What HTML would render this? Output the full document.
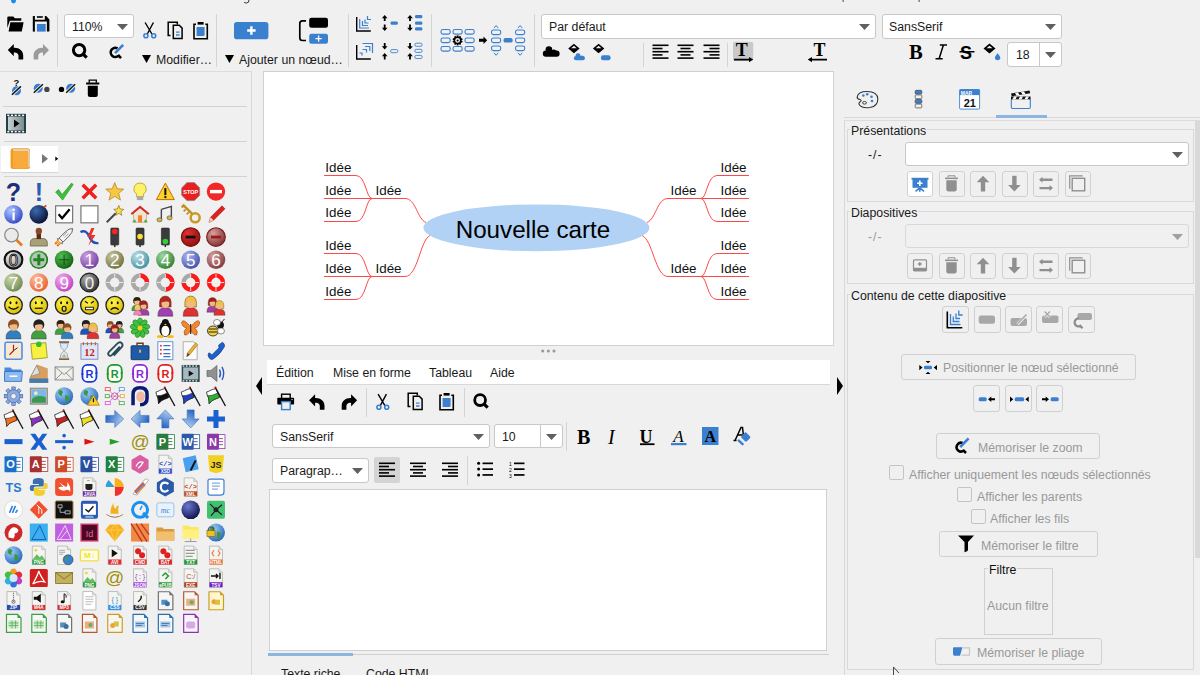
<!DOCTYPE html>
<html><head><meta charset="utf-8"><style>
html,body{margin:0;padding:0;}
body{width:1200px;height:675px;overflow:hidden;position:relative;background:#f0f0f0;font-family:"Liberation Sans", sans-serif;}
.t{position:absolute;white-space:nowrap;}
svg{overflow:visible}
</style></head><body>
<svg style="position:absolute;left:0;top:0" width="1200" height="675"><path d="M7.3 17.5Q7.3 16.5 8.3 16.5H13.3L14.8 18.2H21.3V20.8H9.8L7.3 28Z" fill="#000"/><path d="M10.4 22.2H23.6L21.8 31.6H8.6Z" fill="#000"/><rect x="32.8" y="16" width="2.1" height="15.6" fill="#000"/><path d="M44.8 16H46.2L49.4 19.4V31.6H46.9V21.4H34.8V19.7H44.8Z" fill="#000"/><rect x="36.9" y="16.2" width="5.9" height="1.6" fill="#000"/><rect x="36.9" y="24" width="8.8" height="7.6" fill="#3b7fcf"/><path transform="translate(0,0)" d="M7.8 50 L13.8 44 V47.8 H14.5 C19.5 47.8 23.2 51 23.2 55.5 V59.6 H18.5 V55.8 C18.5 53.8 17 52.5 14.8 52.5 H13.8 V56.2 Z" fill="#000"/><path transform="translate(0,0) translate(56.8,0) scale(-1,1)" d="M7.8 50 L13.8 44 V47.8 H14.5 C19.5 47.8 23.2 51 23.2 55.5 V59.6 H18.5 V55.8 C18.5 53.8 17 52.5 14.8 52.5 H13.8 V56.2 Z" fill="#9a9a9a"/><circle cx="79.1" cy="50.1" r="5.7" fill="none" stroke="#000" stroke-width="3"/><path d="M83.39999999999999 54.4L86.69999999999999 57.7" stroke="#000" stroke-width="3.2" stroke-linecap="butt"/><path d="M117.5 48.3A4.6 4.6 0 1 0 118.6 55.6" fill="none" stroke="#000" stroke-width="2.6"/><path d="M118 55L121 58.2" stroke="#000" stroke-width="2.6"/><path d="M115 53.2L123.2 44.8" stroke="#3b7fcf" stroke-width="2.6"/><g transform="translate(0,0)"><path d="M145.1 22.5L151.9 34M153.4 22.5L147.3 34" stroke="#000" stroke-width="1.4"/><circle cx="145.9" cy="35.7" r="2" fill="none" stroke="#3b7fcf" stroke-width="1.6"/><circle cx="153.7" cy="35.7" r="2" fill="none" stroke="#3b7fcf" stroke-width="1.6"/></g><g transform="translate(0,0)"><path d="M170.5 35.5H168.2V22.3H177.3V24.6" fill="none" stroke="#000" stroke-width="1.5"/><path d="M173.3 38.4V25.3H179.3L182.1 28.1V38.4Z" fill="none" stroke="#000" stroke-width="1.5"/><path d="M176 32.2H179.6M176 35H179.6" stroke="#3b7fcf" stroke-width="1.3"/></g><g transform="translate(0,0)"><path d="M196 24.3H194V38.8H207.3V24.3H205.3" fill="none" stroke="#000" stroke-width="1.6"/><rect x="197.6" y="22" width="6" height="2.6" fill="#000"/><path d="M196.6 27H204.6V34.5Q204.6 36 203 36H196.6Z" fill="#3b7fcf"/></g><rect x="234" y="22" width="34.4" height="17.2" rx="2.8" fill="#3b7fcf"/><path d="M251.4 26.3V34.7M247.2 30.5H255.6" stroke="#fff" stroke-width="2.4"/><path d="M306 20.9H302.5Q299.8 20.9 299.8 23.6V37.8Q299.8 40.5 302.5 40.5H306" fill="none" stroke="#000" stroke-width="1.7"/><rect x="309.2" y="17.7" width="18.8" height="10.1" rx="2.2" fill="#000"/><rect x="309.2" y="33.7" width="18.8" height="10.1" rx="2.2" fill="#3b7fcf"/><path d="M318.6 35.6V41.8M315.5 38.7H321.7" stroke="#fff" stroke-width="1.3"/><path d="M356.7 17V31H370.8" fill="none" stroke="#000" stroke-width="1.4"/><path d="M359.7 19V28H369M362.5 21V25.5H368M365 19.5V23H368.5M367.5 16V19.5H371" fill="none" stroke="#3b7fcf" stroke-width="1.2"/><path d="M384.7 15L387.5 18.2H385.59999999999997V21H383.8V18.2H381.9Z" fill="#000"/><path d="M384.7 31L387.5 27.8H385.59999999999997V24.5H383.8V27.8H381.9Z" fill="#000"/><rect x="390.5" y="21.5" width="7.4" height="3.3" rx="1.386" fill="#3b7fcf"/><path d="M410 15L412.8 18.2H410.9V21H409.1V18.2H407.2Z" fill="#000"/><path d="M410 31L412.8 27.8H410.9V24.5H409.1V27.8H407.2Z" fill="#000"/><rect x="415" y="15" width="7.4" height="3.3" rx="1.386" fill="#3b7fcf"/><rect x="415" y="21.5" width="7.4" height="3.3" rx="1.386" fill="#3b7fcf"/><rect x="415" y="27.3" width="7.4" height="3.3" rx="1.386" fill="#3b7fcf"/><path d="M356.7 45V59H370.8" fill="none" stroke="#000" stroke-width="1.4"/><path d="M362.5 43.5H372.5V53M365 46.5H369.8V51M362.5 49.5H366.5V52.5M359.5 53H362V55.5" fill="none" stroke="#3b7fcf" stroke-width="1.2"/><path d="M384.7 49.5L387.5 46.3H385.59999999999997V43H383.8V46.3H381.9Z" fill="#000"/><path d="M384.7 53L387.5 56.2H385.59999999999997V59.5H383.8V56.2H381.9Z" fill="#000"/><rect x="390.6" y="49.6" width="7.2" height="3.1" rx="1.302" fill="none" stroke="#3b7fcf" stroke-width="0.9"/><path d="M410 49.5L412.8 46.3H410.9V43H409.1V46.3H407.2Z" fill="#000"/><path d="M410 53L412.8 56.2H410.9V59.5H409.1V56.2H407.2Z" fill="#000"/><rect x="414.9" y="43.2" width="7.2" height="3.1" rx="1.302" fill="none" stroke="#3b7fcf" stroke-width="0.9"/><rect x="414.9" y="49.3" width="7.2" height="3.1" rx="1.302" fill="none" stroke="#3b7fcf" stroke-width="0.9"/><rect x="414.9" y="55.4" width="7.2" height="3.1" rx="1.302" fill="none" stroke="#3b7fcf" stroke-width="0.9"/><rect x="441" y="29.5" width="9.2" height="4.6" rx="1.9319999999999997" fill="none" stroke="#3b7fcf" stroke-width="1.1"/><rect x="441" y="38" width="9.2" height="4.6" rx="1.9319999999999997" fill="none" stroke="#3b7fcf" stroke-width="1.1"/><rect x="441" y="46.5" width="9.2" height="4.6" rx="1.9319999999999997" fill="none" stroke="#3b7fcf" stroke-width="1.1"/><rect x="453" y="29.5" width="9.2" height="4.6" rx="1.9319999999999997" fill="none" stroke="#3b7fcf" stroke-width="1.1"/><rect x="453" y="46.5" width="9.2" height="4.6" rx="1.9319999999999997" fill="none" stroke="#3b7fcf" stroke-width="1.1"/><rect x="465" y="29.5" width="9.2" height="4.6" rx="1.9319999999999997" fill="none" stroke="#3b7fcf" stroke-width="1.1"/><rect x="465" y="38" width="9.2" height="4.6" rx="1.9319999999999997" fill="none" stroke="#3b7fcf" stroke-width="1.1"/><rect x="465" y="46.5" width="9.2" height="4.6" rx="1.9319999999999997" fill="none" stroke="#3b7fcf" stroke-width="1.1"/><g transform="translate(457.6,40.4)"><rect x="-0.9" y="-5" width="1.8" height="2.5" fill="#000" transform="rotate(0)"/><rect x="-0.9" y="-5" width="1.8" height="2.5" fill="#000" transform="rotate(36)"/><rect x="-0.9" y="-5" width="1.8" height="2.5" fill="#000" transform="rotate(72)"/><rect x="-0.9" y="-5" width="1.8" height="2.5" fill="#000" transform="rotate(108)"/><rect x="-0.9" y="-5" width="1.8" height="2.5" fill="#000" transform="rotate(144)"/><rect x="-0.9" y="-5" width="1.8" height="2.5" fill="#000" transform="rotate(180)"/><rect x="-0.9" y="-5" width="1.8" height="2.5" fill="#000" transform="rotate(216)"/><rect x="-0.9" y="-5" width="1.8" height="2.5" fill="#000" transform="rotate(252)"/><rect x="-0.9" y="-5" width="1.8" height="2.5" fill="#000" transform="rotate(288)"/><rect x="-0.9" y="-5" width="1.8" height="2.5" fill="#000" transform="rotate(324)"/><circle r="3.8" fill="#000"/><circle r="2.4" fill="#f0f0f0"/><circle r="1" fill="#000"/></g><path d="M479 38.8H483.5V36.5L487.2 40.3L483.5 44V41.7H479Z" fill="#000"/><rect x="491.5" y="30" width="9.2" height="4.6" rx="1.9319999999999997" fill="none" stroke="#3b7fcf" stroke-width="1.1"/><rect x="491.5" y="38" width="9.2" height="4.6" rx="1.9319999999999997" fill="none" stroke="#3b7fcf" stroke-width="1.1"/><rect x="491.5" y="46" width="9.2" height="4.6" rx="1.9319999999999997" fill="none" stroke="#3b7fcf" stroke-width="1.1"/><path d="M494.0 28L496.1 25.5L498.2 28M494.0 52.8L496.1 55.3L498.2 52.8" fill="none" stroke="#3b7fcf" stroke-width="1"/><rect x="515.5" y="30" width="9.2" height="4.6" rx="1.9319999999999997" fill="none" stroke="#3b7fcf" stroke-width="1.1"/><rect x="515.5" y="38" width="9.2" height="4.6" rx="1.9319999999999997" fill="none" stroke="#3b7fcf" stroke-width="1.1"/><rect x="515.5" y="46" width="9.2" height="4.6" rx="1.9319999999999997" fill="none" stroke="#3b7fcf" stroke-width="1.1"/><path d="M518.0 28L520.1 25.5L522.2 28M518.0 52.8L520.1 55.3L522.2 52.8" fill="none" stroke="#3b7fcf" stroke-width="1"/><rect x="503.5" y="38" width="9.2" height="4.6" rx="1.9319999999999997" fill="#3b7fcf"/><rect x="542.8" y="50.6" width="16.8" height="6.2" rx="3" fill="#000"/><circle cx="548.9" cy="49.6" r="3.3" fill="#000"/><circle cx="553.8" cy="52" r="2.6" fill="#000"/><path d="M573.9 43.7L579.6 48.5L573.9 53.3L568.1999999999999 48.5Z" fill="#000"/><path d="M571.05 48.26L573.9 45.86L576.75 48.26Z" fill="#f0f0f0"/><rect x="573.9" y="56" width="11" height="4.3" rx="2.1" fill="#3b7fcf"/><circle cx="578" cy="55.6" r="2.4" fill="#3b7fcf"/><circle cx="581.8" cy="57.3" r="1.9" fill="#3b7fcf"/><path d="M598.6 43.7L604.3000000000001 48.5L598.6 53.3L592.9 48.5Z" fill="#000"/><path d="M595.75 48.26L598.6 45.86L601.45 48.26Z" fill="#f0f0f0"/><rect x="601" y="55.2" width="9.5" height="5" rx="2" fill="#3b7fcf"/><rect x="652.5" y="44.5" width="16" height="1.6" fill="#000"/><rect x="652.5" y="47.7" width="10" height="1.6" fill="#000"/><rect x="652.5" y="50.9" width="16" height="1.6" fill="#000"/><rect x="652.5" y="54.1" width="10" height="1.6" fill="#000"/><rect x="652.5" y="57.3" width="16" height="1.6" fill="#000"/><rect x="677.5" y="44.5" width="16" height="1.6" fill="#000"/><rect x="680.5" y="47.7" width="10" height="1.6" fill="#000"/><rect x="677.5" y="50.9" width="16" height="1.6" fill="#000"/><rect x="680.5" y="54.1" width="10" height="1.6" fill="#000"/><rect x="677.5" y="57.3" width="16" height="1.6" fill="#000"/><rect x="703.5" y="44.5" width="16" height="1.6" fill="#000"/><rect x="709.5" y="47.7" width="10" height="1.6" fill="#000"/><rect x="703.5" y="50.9" width="16" height="1.6" fill="#000"/><rect x="709.5" y="54.1" width="10" height="1.6" fill="#000"/><rect x="703.5" y="57.3" width="16" height="1.6" fill="#000"/><rect x="733" y="41.7" width="20.2" height="19.3" rx="2" fill="#c9c9c9"/><text x="741.7" y="56" font-family="Liberation Serif" font-weight="bold" font-size="18" text-anchor="middle" fill="#000">T</text><path d="M734 58.8H749V57L753.3 59.6L749 62.2V60.4H734Z" fill="#000"/><text x="819.5" y="56" font-family="Liberation Serif" font-weight="bold" font-size="18" text-anchor="middle" fill="#000">T</text><path d="M827 58.8H812V57L807.7 59.6L812 62.2V60.4H827Z" fill="#000"/><text x="909" y="59.2" font-family="Liberation Serif" font-weight="bold" font-size="20.5" fill="#000">B</text><path d="M939.8 45H947M935.5 58.8H942.7M943.4 45L939.1 58.8" stroke="#000" stroke-width="1.5" fill="none"/><text x="960" y="59" font-family="Liberation Sans" font-weight="bold" font-size="18" fill="#000">S</text><rect x="959.5" y="51" width="15" height="1.5" fill="#000"/><path d="M989.5 43.6L995.5 48.6L989.5 53.6L983.5 48.6Z" fill="#000"/><path d="M986.5 48.35L989.5 45.85L992.5 48.35Z" fill="#f0f0f0"/><path d="M997.6 53.2Q1000.3 56.5 1000.3 57.6A2.7 2.7 0 0 1 994.9 57.6Q994.9 56.5 997.6 53.2Z" fill="#3b7fcf"/></svg><div style="position:absolute;left:57px;top:14px;width:1px;height:53px;background:#d4d4d4"></div><div style="position:absolute;left:216px;top:14px;width:1px;height:53px;background:#d4d4d4"></div><div style="position:absolute;left:348px;top:14px;width:1px;height:53px;background:#d4d4d4"></div><div style="position:absolute;left:431px;top:14px;width:1px;height:53px;background:#d4d4d4"></div><div style="position:absolute;left:534px;top:14px;width:1px;height:53px;background:#d4d4d4"></div><div style="position:absolute;left:643px;top:43px;width:1px;height:24px;background:#d4d4d4"></div><div style="position:absolute;left:727px;top:43px;width:1px;height:24px;background:#d4d4d4"></div><div style="position:absolute;left:64px;top:14px;width:70px;height:24px;background:#fff;border:1px solid #c8c8c8;border-radius:3px;box-sizing:border-box"></div><div class="t" style="left:72px;top:20.59px;font-size:12.3px;line-height:12.3px;color:#1a1a1a;">110%</div><svg style="position:absolute;left:117px;top:24px" width="11" height="6" viewBox="0 0 11 6"><path d="M0 0H11L5.5 6Z" fill="#606060"/></svg><div style="position:absolute;left:541px;top:14px;width:335px;height:25px;background:#fff;border:1px solid #c8c8c8;border-radius:3px;box-sizing:border-box"></div><div class="t" style="left:549px;top:20.59px;font-size:12.3px;line-height:12.3px;color:#1a1a1a;">Par défaut</div><svg style="position:absolute;left:859px;top:24px" width="11" height="6" viewBox="0 0 11 6"><path d="M0 0H11L5.5 6Z" fill="#606060"/></svg><div style="position:absolute;left:882px;top:14px;width:180px;height:25px;background:#fff;border:1px solid #c8c8c8;border-radius:3px;box-sizing:border-box"></div><div class="t" style="left:889px;top:21.19px;font-size:12.3px;line-height:12.3px;color:#1a1a1a;">SansSerif</div><svg style="position:absolute;left:1045px;top:24px" width="11" height="6" viewBox="0 0 11 6"><path d="M0 0H11L5.5 6Z" fill="#606060"/></svg><div style="position:absolute;left:1007px;top:42px;width:55px;height:25px;background:#fff;border:1px solid #c8c8c8;border-radius:3px;box-sizing:border-box"></div><div class="t" style="left:1016px;top:49.19px;font-size:12.3px;line-height:12.3px;color:#1a1a1a;">18</div><svg style="position:absolute;left:1045px;top:52px" width="11" height="6" viewBox="0 0 11 6"><path d="M0 0H11L5.5 6Z" fill="#606060"/></svg><div style="position:absolute;left:1039px;top:43px;width:1px;height:23px;background:#c8c8c8"></div><div class="t" style="left:156px;top:53.59px;font-size:12.3px;line-height:12.3px;color:#1a1a1a;">Modifier…</div><div class="t" style="left:239px;top:53.89px;font-size:12.3px;line-height:12.3px;color:#1a1a1a;">Ajouter un nœud…</div><svg style="position:absolute;left:141.5px;top:55px" width="9" height="8" viewBox="0 0 9 8"><path d="M0 0H9L4.5 8Z" fill="#000"/></svg><svg style="position:absolute;left:224.5px;top:55px" width="9" height="8" viewBox="0 0 9 8"><path d="M0 0H9L4.5 8Z" fill="#000"/></svg><div style="position:absolute;left:0px;top:71px;width:252px;height:604px;border-top:1px solid #dcdcdc;border-right:1px solid #d8d8d8;box-sizing:border-box"></div><div style="position:absolute;left:3px;top:106px;width:244px;height:1px;background:#d2d2d2"></div><div style="position:absolute;left:4px;top:141px;width:243px;height:1px;background:#d2d2d2"></div><div style="position:absolute;left:1px;top:146px;width:57px;height:26px;background:#fff"></div><div style="position:absolute;left:1px;top:172px;width:57px;height:1px;background:#d6d6d6"></div><div style="position:absolute;left:4px;top:176px;width:243px;height:1px;background:#d2d2d2"></div><svg style="position:absolute;left:0;top:0" width="1200" height="675"><g transform="translate(3.50,181.60)"><text x="10" y="19.375" font-family="Liberation Sans" font-weight="bold" font-style="normal" font-size="25" text-anchor="middle" fill="#1c2f7a">?</text></g><g transform="translate(28.81,181.60)"><text x="10" y="19.375" font-family="Liberation Sans" font-weight="bold" font-style="normal" font-size="25" text-anchor="middle" fill="#2a5ab8">!</text></g><g transform="translate(54.12,181.60)"><path d="M1.5 10.5L4.5 8L8 13L17.5 1.5L19 3L8.5 18.5Z" fill="#3cc03c" stroke="#1f8a1f" stroke-width="0.6"/></g><g transform="translate(79.43,181.60)"><path d="M2 4.5L4.5 2L10 7.5L15.5 2L18 4.5L12.5 10L18 15.5L15.5 18L10 12.5L4.5 18L2 15.5L7.5 10Z" fill="#f02020"/></g><g transform="translate(104.74,181.60)"><path d="M10 1L12.6 7.2L19 7.5L14 11.7L15.7 18.5L10 14.8L4.3 18.5L6 11.7L1 7.5L7.4 7.2Z" fill="#f5c842" stroke="#b08020" stroke-width="0.7"/></g><g transform="translate(130.05,181.60)"><path d="M10 1.5A6 6 0 0 1 13.5 12.5V15H6.5V12.5A6 6 0 0 1 10 1.5Z" fill="#fff26a" stroke="#a09020" stroke-width="0.7"/><rect x="6.8" y="15" width="6.4" height="3.5" fill="#aaa"/></g><g transform="translate(155.36,181.60)"><path d="M10 1.5L19 18H1Z" fill="#fcd030" stroke="#c07000" stroke-width="1"/><rect x="9" y="6.5" width="2" height="7" fill="#111"/><rect x="9" y="14.5" width="2" height="2" fill="#111"/></g><g transform="translate(180.67,181.60)"><path d="M6.3 1H13.7L19 6.3V13.7L13.7 19H6.3L1 13.7V6.3Z" fill="#e82020" stroke="#888" stroke-width="0.8"/><text x="10" y="12" font-family="Liberation Sans" font-weight="bold" font-size="5.5" text-anchor="middle" fill="#fff">STOP</text></g><g transform="translate(205.98,181.60)"><circle cx="10" cy="10" r="9.2" fill="#f02828"/><rect x="4" y="8.3" width="12" height="3.4" fill="#fff"/></g><g transform="translate(3.50,204.33)"><defs><radialGradient id="g1" cx="0.35" cy="0.3" r="0.75"><stop offset="0" stop-color="#b0c8ff"/><stop offset="1" stop-color="#3048c8"/></radialGradient></defs><circle cx="10" cy="10" r="9.3" fill="url(#g1)"/><rect x="9" y="8" width="2.2" height="8" fill="#fff"/><circle cx="10.1" cy="5.5" r="1.3" fill="#fff"/></g><g transform="translate(28.81,204.33)"><defs><radialGradient id="g2" cx="0.35" cy="0.3" r="0.75"><stop offset="0" stop-color="#3a6ab0"/><stop offset="1" stop-color="#0a1030"/></radialGradient></defs><circle cx="10" cy="10" r="9.3" fill="url(#g2)"/><path d="M15 3L17.5 1" stroke="#d04010" stroke-width="1.6"/></g><g transform="translate(54.12,204.33)"><rect x="1.5" y="1.5" width="17" height="17" fill="#fff" stroke="#777" stroke-width="1.2"/><path d="M4.5 10L8 14L15.5 5" fill="none" stroke="#000" stroke-width="2.3"/></g><g transform="translate(79.43,204.33)"><rect x="1.5" y="1.5" width="17" height="17" fill="#fff" stroke="#777" stroke-width="1.2"/></g><g transform="translate(104.74,204.33)"><path d="M2 18L11 9" stroke="#444" stroke-width="2"/><path d="M14 1L15.3 4.6L19 5L16.2 7.4L17 11L14 9L11 11L11.8 7.4L9 5L12.7 4.6Z" fill="#f8e040" stroke="#806010" stroke-width="0.6"/></g><g transform="translate(130.05,204.33)"><path d="M1 9L10 1.5L19 9H16.5V18H3.5V9Z" fill="#f0e6d0" stroke="#a08060" stroke-width="0.5"/><path d="M0.5 9.5L10 1.5L19.5 9.5L18 10.5L10 4L2 10.5Z" fill="#d82020"/><rect x="8" y="11" width="4" height="7" fill="#f08030"/><path d="M2 18L5 15L6 18ZM14 18L15 15L18 18Z" fill="#40b040"/></g><g transform="translate(155.36,204.33)"><path d="M6 5L16 2V13" fill="none" stroke="#444" stroke-width="1.4"/><path d="M6 5V15" stroke="#444" stroke-width="1.4"/><ellipse cx="4.2" cy="15.5" rx="2.6" ry="2" fill="#d8b840" stroke="#444" stroke-width="0.6"/><ellipse cx="14.2" cy="13.5" rx="2.6" ry="2" fill="#d8b840" stroke="#444" stroke-width="0.6"/></g><g transform="translate(180.67,204.33)"><path d="M1 3L3 1L12 10" stroke="#c09020" stroke-width="2.4" fill="none"/><circle cx="14.5" cy="13.5" r="4.5" fill="none" stroke="#c89a20" stroke-width="2.5"/><path d="M5 5L3 7M8 8L6 10" stroke="#c09020" stroke-width="1.8"/></g><g transform="translate(205.98,204.33)"><path d="M3 18L4.5 13L16 1.5L19 4.5L7.5 16Z" fill="#e02020" stroke="#901010" stroke-width="0.5"/><path d="M3 18L4.5 13L7.5 16Z" fill="#f0d8b0"/></g><g transform="translate(3.50,227.06)"><circle cx="8" cy="8" r="6.8" fill="#eaeaea" stroke="#888" stroke-width="1.2"/><path d="M12.8 12.8L18.5 18.5" stroke="#e08020" stroke-width="2.8"/></g><g transform="translate(28.81,227.06)"><path d="M1.5 19V16Q1.5 11.5 6 11.5H14Q18.5 11.5 18.5 16V19Z" fill="#a8a078" stroke="#605838" stroke-width="0.7"/><rect x="7.8" y="6" width="4.4" height="6" fill="#602818"/><circle cx="10" cy="4" r="3.2" fill="#8a4a28"/></g><g transform="translate(54.12,227.06)"><path d="M18.5 1.5Q15 1 11 5L5 11L9 15L15 9Q19 5 18.5 1.5Z" fill="#f4f4f4" stroke="#555" stroke-width="0.9"/><path d="M5 11L2.5 11.5L4 14ZM9 15L8.5 17.5L6 16Z" fill="#777"/><path d="M9 9L13 5M10.5 10.5L14.5 6.5" stroke="#888" stroke-width="0.8"/><path d="M4.5 13.5L1 17M6.5 15.5L3 19" stroke="#f07010" stroke-width="2"/><path d="M4.5 13.5L2.5 15.5M6.5 15.5L4.5 17.5" stroke="#ffe040" stroke-width="1"/></g><g transform="translate(79.43,227.06)"><path d="M1 5Q7 2 10 10Q13 17 19 16" fill="none" stroke="#2050c0" stroke-width="2.3"/><path d="M12 1L8 10H12L9 19L16 8H12L15 1Z" fill="#f03020"/></g><g transform="translate(104.74,227.06)"><rect x="6" y="1" width="8" height="17" rx="1" fill="#3c3c3c" stroke="#222" stroke-width="0.6"/><rect x="9.3" y="18" width="1.4" height="2" fill="#222"/><circle cx="10" cy="4.5" r="2.8" fill="#ff2020"/><circle cx="10" cy="9.5" r="2.1" fill="#3a3a3a"/><circle cx="10" cy="14.5" r="2.1" fill="#3a3a3a"/></g><g transform="translate(130.05,227.06)"><rect x="6" y="1" width="8" height="17" rx="1" fill="#3c3c3c" stroke="#222" stroke-width="0.6"/><rect x="9.3" y="18" width="1.4" height="2" fill="#222"/><circle cx="10" cy="4.5" r="2.1" fill="#3a3a3a"/><circle cx="10" cy="9.5" r="2.8" fill="#ffe030"/><circle cx="10" cy="14.5" r="2.1" fill="#3a3a3a"/></g><g transform="translate(155.36,227.06)"><rect x="6" y="1" width="8" height="17" rx="1" fill="#3c3c3c" stroke="#222" stroke-width="0.6"/><rect x="9.3" y="18" width="1.4" height="2" fill="#222"/><circle cx="10" cy="4.5" r="2.1" fill="#3a3a3a"/><circle cx="10" cy="9.5" r="2.1" fill="#3a3a3a"/><circle cx="10" cy="14.5" r="2.8" fill="#30d030"/></g><g transform="translate(180.67,227.06)"><defs><radialGradient id="g3" cx="0.35" cy="0.3" r="0.75"><stop offset="0" stop-color="#e03030"/><stop offset="1" stop-color="#901010"/></radialGradient></defs><circle cx="10" cy="10" r="9.3" fill="url(#g3)" stroke="#7a1010" stroke-width="1.2"/><rect x="5" y="8.6" width="10" height="2.8" fill="#111"/></g><g transform="translate(205.98,227.06)"><defs><radialGradient id="g4" cx="0.35" cy="0.3" r="0.75"><stop offset="0" stop-color="#d8a0a0"/><stop offset="1" stop-color="#803030"/></radialGradient></defs><circle cx="10" cy="10" r="9.3" fill="url(#g4)" stroke="#7a2020" stroke-width="1.2"/><rect x="5" y="8.6" width="10" height="2.8" fill="#a01818"/></g><g transform="translate(3.50,249.79)"><defs><radialGradient id="g5" cx="0.35" cy="0.3" r="0.75"><stop offset="0" stop-color="#f4f4f4"/><stop offset="1" stop-color="#8a8a8a"/></radialGradient></defs><circle cx="10" cy="10" r="9.3" fill="url(#g5)" stroke="#111" stroke-width="1.2"/><circle cx="10" cy="10" r="8.6" fill="none" stroke="#111" stroke-width="1.6"/><text x="10" y="16.1" font-family="Liberation Sans" font-size="17" text-anchor="middle" fill="#fff" stroke="#111" stroke-width="0.9">0</text></g><g transform="translate(28.81,249.79)"><defs><radialGradient id="g6" cx="0.35" cy="0.3" r="0.75"><stop offset="0" stop-color="#50d050"/><stop offset="1" stop-color="#107010"/></radialGradient></defs><circle cx="10" cy="10" r="9.3" fill="url(#g6)"/><circle cx="10" cy="10" r="7.6" fill="#c0c0c0"/><path d="M10 4.5V15.5M4.5 10H15.5" stroke="#1a8a1a" stroke-width="3"/></g><g transform="translate(54.12,249.79)"><defs><radialGradient id="g7" cx="0.35" cy="0.3" r="0.75"><stop offset="0" stop-color="#50c050"/><stop offset="1" stop-color="#106010"/></radialGradient></defs><circle cx="10" cy="10" r="9.3" fill="url(#g7)"/><path d="M10 5V15M5 10H15" stroke="#113311" stroke-width="0.8"/></g><g transform="translate(79.43,249.79)"><defs><radialGradient id="g8" cx="0.35" cy="0.3" r="0.75"><stop offset="0" stop-color="#d0a0e0"/><stop offset="1" stop-color="#7040a0"/></radialGradient></defs><circle cx="10" cy="10" r="9.3" fill="url(#g8)"/><text x="10" y="16.12" font-family="Liberation Sans" font-size="17" text-anchor="middle" fill="#fff">1</text></g><g transform="translate(104.74,249.79)"><defs><radialGradient id="g9" cx="0.35" cy="0.3" r="0.75"><stop offset="0" stop-color="#c8c8a0"/><stop offset="1" stop-color="#707040"/></radialGradient></defs><circle cx="10" cy="10" r="9.3" fill="url(#g9)"/><text x="10" y="16.12" font-family="Liberation Sans" font-size="17" text-anchor="middle" fill="#fff">2</text></g><g transform="translate(130.05,249.79)"><defs><radialGradient id="g10" cx="0.35" cy="0.3" r="0.75"><stop offset="0" stop-color="#c0e0e8"/><stop offset="1" stop-color="#4090a0"/></radialGradient></defs><circle cx="10" cy="10" r="9.3" fill="url(#g10)"/><text x="10" y="16.12" font-family="Liberation Sans" font-size="17" text-anchor="middle" fill="#fff">3</text></g><g transform="translate(155.36,249.79)"><defs><radialGradient id="g11" cx="0.35" cy="0.3" r="0.75"><stop offset="0" stop-color="#a0d8a0"/><stop offset="1" stop-color="#308030"/></radialGradient></defs><circle cx="10" cy="10" r="9.3" fill="url(#g11)"/><text x="10" y="16.12" font-family="Liberation Sans" font-size="17" text-anchor="middle" fill="#fff">4</text></g><g transform="translate(180.67,249.79)"><defs><radialGradient id="g12" cx="0.35" cy="0.3" r="0.75"><stop offset="0" stop-color="#b0b8f0"/><stop offset="1" stop-color="#4050a8"/></radialGradient></defs><circle cx="10" cy="10" r="9.3" fill="url(#g12)"/><text x="10" y="16.12" font-family="Liberation Sans" font-size="17" text-anchor="middle" fill="#fff">5</text></g><g transform="translate(205.98,249.79)"><defs><radialGradient id="g13" cx="0.35" cy="0.3" r="0.75"><stop offset="0" stop-color="#d8a0a0"/><stop offset="1" stop-color="#803838"/></radialGradient></defs><circle cx="10" cy="10" r="9.3" fill="url(#g13)"/><text x="10" y="16.12" font-family="Liberation Sans" font-size="17" text-anchor="middle" fill="#fff">6</text></g><g transform="translate(3.50,272.52)"><defs><radialGradient id="g14" cx="0.35" cy="0.3" r="0.75"><stop offset="0" stop-color="#c8d8a8"/><stop offset="1" stop-color="#708850"/></radialGradient></defs><circle cx="10" cy="10" r="9.3" fill="url(#g14)"/><text x="10" y="16.12" font-family="Liberation Sans" font-size="17" text-anchor="middle" fill="#fff">7</text></g><g transform="translate(28.81,272.52)"><defs><radialGradient id="g15" cx="0.35" cy="0.3" r="0.75"><stop offset="0" stop-color="#ffc0a0"/><stop offset="1" stop-color="#e86030"/></radialGradient></defs><circle cx="10" cy="10" r="9.3" fill="url(#g15)"/><text x="10" y="16.12" font-family="Liberation Sans" font-size="17" text-anchor="middle" fill="#fff">8</text></g><g transform="translate(54.12,272.52)"><defs><radialGradient id="g16" cx="0.35" cy="0.3" r="0.75"><stop offset="0" stop-color="#f0b0f0"/><stop offset="1" stop-color="#c040c0"/></radialGradient></defs><circle cx="10" cy="10" r="9.3" fill="url(#g16)"/><text x="10" y="16.12" font-family="Liberation Sans" font-size="17" text-anchor="middle" fill="#fff">9</text></g><g transform="translate(79.43,272.52)"><defs><radialGradient id="g17" cx="0.35" cy="0.3" r="0.75"><stop offset="0" stop-color="#b0b0b0"/><stop offset="1" stop-color="#303030"/></radialGradient></defs><circle cx="10" cy="10" r="9.3" fill="url(#g17)" stroke="#222" stroke-width="1.2"/><text x="10" y="16.12" font-family="Liberation Sans" font-size="17" text-anchor="middle" fill="#eee">0</text></g><g transform="translate(104.74,272.52)"><circle cx="10" cy="10" r="7" fill="none" stroke="#a8a8a8" stroke-width="4.4"/><path d="M10 1.5V5.5M10 14.5V18.5M1.5 10H5.5M14.5 10H18.5" stroke="#f0f0f0" stroke-width="0.9"/></g><g transform="translate(130.05,272.52)"><circle cx="10" cy="10" r="7" fill="none" stroke="#a8a8a8" stroke-width="4.4"/><path d="M10.00 3.00A7 7 0 0 1 17.00 10.00" fill="none" stroke="#ff1a1a" stroke-width="4.4"/><path d="M10 1.5V5.5M10 14.5V18.5M1.5 10H5.5M14.5 10H18.5" stroke="#f0f0f0" stroke-width="0.9"/></g><g transform="translate(155.36,272.52)"><circle cx="10" cy="10" r="7" fill="none" stroke="#a8a8a8" stroke-width="4.4"/><path d="M10.00 3.00A7 7 0 0 1 10.00 17.00" fill="none" stroke="#ff1a1a" stroke-width="4.4"/><path d="M10 1.5V5.5M10 14.5V18.5M1.5 10H5.5M14.5 10H18.5" stroke="#f0f0f0" stroke-width="0.9"/></g><g transform="translate(180.67,272.52)"><circle cx="10" cy="10" r="7" fill="none" stroke="#a8a8a8" stroke-width="4.4"/><path d="M10.00 3.00A7 7 0 1 1 3.00 10.00" fill="none" stroke="#ff1a1a" stroke-width="4.4"/><path d="M10 1.5V5.5M10 14.5V18.5M1.5 10H5.5M14.5 10H18.5" stroke="#f0f0f0" stroke-width="0.9"/></g><g transform="translate(205.98,272.52)"><circle cx="10" cy="10" r="7" fill="none" stroke="#ff1a1a" stroke-width="4.4"/><path d="M10 1.5V5.5M10 14.5V18.5M1.5 10H5.5M14.5 10H18.5" stroke="#f0f0f0" stroke-width="0.9"/></g><g transform="translate(3.50,295.25)"><defs><radialGradient id="g18" cx="0.4" cy="0.35" r="0.7"><stop offset="0" stop-color="#fff64a"/><stop offset="1" stop-color="#d9b800"/></radialGradient></defs><circle cx="10" cy="10" r="8.8" fill="url(#g18)" stroke="#222" stroke-width="1.3"/><ellipse cx="7" cy="7.5" rx="1" ry="1.5" fill="#111"/><ellipse cx="13" cy="7.5" rx="1" ry="1.5" fill="#111"/><path d="M5 11.5Q10 16.5 15 11.5" fill="none" stroke="#111" stroke-width="1.2"/></g><g transform="translate(28.81,295.25)"><defs><radialGradient id="g19" cx="0.4" cy="0.35" r="0.7"><stop offset="0" stop-color="#fff64a"/><stop offset="1" stop-color="#d9b800"/></radialGradient></defs><circle cx="10" cy="10" r="8.8" fill="url(#g19)" stroke="#222" stroke-width="1.3"/><ellipse cx="7" cy="7.5" rx="1" ry="1.5" fill="#111"/><ellipse cx="13" cy="7.5" rx="1" ry="1.5" fill="#111"/><path d="M6 13H14" stroke="#111" stroke-width="1.2"/></g><g transform="translate(54.12,295.25)"><defs><radialGradient id="g20" cx="0.4" cy="0.35" r="0.7"><stop offset="0" stop-color="#fff64a"/><stop offset="1" stop-color="#d9b800"/></radialGradient></defs><circle cx="10" cy="10" r="8.8" fill="url(#g20)" stroke="#222" stroke-width="1.3"/><ellipse cx="7" cy="7.5" rx="1" ry="1.5" fill="#111"/><ellipse cx="13" cy="7.5" rx="1" ry="1.5" fill="#111"/><ellipse cx="10" cy="13.5" rx="2" ry="2.5" fill="none" stroke="#111" stroke-width="1.2"/></g><g transform="translate(79.43,295.25)"><defs><radialGradient id="g21" cx="0.4" cy="0.35" r="0.7"><stop offset="0" stop-color="#fff64a"/><stop offset="1" stop-color="#d9b800"/></radialGradient></defs><circle cx="10" cy="10" r="8.8" fill="url(#g21)" stroke="#222" stroke-width="1.3"/><path d="M5.5 6L8.5 8M14.5 6L11.5 8" stroke="#111" stroke-width="1.3"/><rect x="6" y="12" width="8" height="2.5" fill="#fff" stroke="#111" stroke-width="0.9"/></g><g transform="translate(104.74,295.25)"><defs><radialGradient id="g22" cx="0.4" cy="0.35" r="0.7"><stop offset="0" stop-color="#fff64a"/><stop offset="1" stop-color="#d9b800"/></radialGradient></defs><circle cx="10" cy="10" r="8.8" fill="url(#g22)" stroke="#222" stroke-width="1.3"/><ellipse cx="7" cy="7.5" rx="1" ry="1.5" fill="#111"/><ellipse cx="13" cy="7.5" rx="1" ry="1.5" fill="#111"/><path d="M6 14.5Q10 10.5 14 14.5" fill="none" stroke="#111" stroke-width="1.2"/></g><g transform="translate(130.05,295.25)"><g transform="translate(7,5) scale(0.8)"><path d="M-6.5 13Q-7 5.5 0 5.5Q7 5.5 6.5 13Z" fill="#40a040" stroke="#333" stroke-width="0.4"/><circle cx="0" cy="0.6" r="4.8" fill="#302010"/><ellipse cx="0" cy="2.2" rx="3.4" ry="3.6" fill="#f0b98a"/><path d="M-3.6 1Q-3 -2.8 0 -2.6Q3 -2.8 3.6 1Q2 -0.5 -3.6 1Z" fill="#302010"/></g><g transform="translate(13.5,9) scale(0.85)"><path d="M-6.5 13Q-7 5.5 0 5.5Q7 5.5 6.5 13Z" fill="#a040a0" stroke="#333" stroke-width="0.4"/><path d="M-5 5Q-6 -4.5 0 -4.5Q6 -4.5 5 5Z" fill="#a02020" stroke="#5a2a10" stroke-width="0.4"/><ellipse cx="0" cy="2.2" rx="3.4" ry="3.6" fill="#f0b98a"/><path d="M-3.6 1Q-3 -2.8 0 -2.6Q3 -2.8 3.6 1Q2 -0.5 -3.6 1Z" fill="#a02020"/></g><g transform="translate(7.5,12) scale(0.6)"><path d="M-6.5 13Q-7 5.5 0 5.5Q7 5.5 6.5 13Z" fill="#ff80c0" stroke="#333" stroke-width="0.4"/><path d="M-5 5Q-6 -4.5 0 -4.5Q6 -4.5 5 5Z" fill="#f0d060" stroke="#5a2a10" stroke-width="0.4"/><ellipse cx="0" cy="2.2" rx="3.4" ry="3.6" fill="#f0b98a"/><path d="M-3.6 1Q-3 -2.8 0 -2.6Q3 -2.8 3.6 1Q2 -0.5 -3.6 1Z" fill="#f0d060"/></g></g><g transform="translate(155.36,295.25)"><g transform="translate(10,6) scale(1.15)"><path d="M-6.5 13Q-7 5.5 0 5.5Q7 5.5 6.5 13Z" fill="#a040b0" stroke="#333" stroke-width="0.4"/><path d="M-5 5Q-6 -4.5 0 -4.5Q6 -4.5 5 5Z" fill="#b02820" stroke="#5a2a10" stroke-width="0.4"/><ellipse cx="0" cy="2.2" rx="3.4" ry="3.6" fill="#f0b98a"/><path d="M-3.6 1Q-3 -2.8 0 -2.6Q3 -2.8 3.6 1Q2 -0.5 -3.6 1Z" fill="#b02820"/></g></g><g transform="translate(180.67,295.25)"><g transform="translate(10,6) scale(1.15)"><path d="M-6.5 13Q-7 5.5 0 5.5Q7 5.5 6.5 13Z" fill="#e03030" stroke="#333" stroke-width="0.4"/><path d="M-5 5Q-6 -4.5 0 -4.5Q6 -4.5 5 5Z" fill="#f0c040" stroke="#5a2a10" stroke-width="0.4"/><ellipse cx="0" cy="2.2" rx="3.4" ry="3.6" fill="#f0b98a"/><path d="M-3.6 1Q-3 -2.8 0 -2.6Q3 -2.8 3.6 1Q2 -0.5 -3.6 1Z" fill="#f0c040"/></g></g><g transform="translate(205.98,295.25)"><g transform="translate(6.5,6) scale(0.85)"><path d="M-6.5 13Q-7 5.5 0 5.5Q7 5.5 6.5 13Z" fill="#a040a0" stroke="#333" stroke-width="0.4"/><path d="M-5 5Q-6 -4.5 0 -4.5Q6 -4.5 5 5Z" fill="#a02020" stroke="#5a2a10" stroke-width="0.4"/><ellipse cx="0" cy="2.2" rx="3.4" ry="3.6" fill="#f0b98a"/><path d="M-3.6 1Q-3 -2.8 0 -2.6Q3 -2.8 3.6 1Q2 -0.5 -3.6 1Z" fill="#a02020"/></g><g transform="translate(13.5,9) scale(0.85)"><path d="M-6.5 13Q-7 5.5 0 5.5Q7 5.5 6.5 13Z" fill="#e03030" stroke="#333" stroke-width="0.4"/><path d="M-5 5Q-6 -4.5 0 -4.5Q6 -4.5 5 5Z" fill="#f0c040" stroke="#5a2a10" stroke-width="0.4"/><ellipse cx="0" cy="2.2" rx="3.4" ry="3.6" fill="#f0b98a"/><path d="M-3.6 1Q-3 -2.8 0 -2.6Q3 -2.8 3.6 1Q2 -0.5 -3.6 1Z" fill="#f0c040"/></g></g><g transform="translate(3.50,317.98)"><g transform="translate(10,6) scale(1.15)"><path d="M-6.5 13Q-7 5.5 0 5.5Q7 5.5 6.5 13Z" fill="#3080c0" stroke="#333" stroke-width="0.4"/><circle cx="0" cy="0.6" r="4.8" fill="#8a5020"/><ellipse cx="0" cy="2.2" rx="3.4" ry="3.6" fill="#f0b98a"/><path d="M-3.6 1Q-3 -2.8 0 -2.6Q3 -2.8 3.6 1Q2 -0.5 -3.6 1Z" fill="#8a5020"/></g></g><g transform="translate(28.81,317.98)"><g transform="translate(10,6) scale(1.15)"><path d="M-6.5 13Q-7 5.5 0 5.5Q7 5.5 6.5 13Z" fill="#40a040" stroke="#333" stroke-width="0.4"/><circle cx="0" cy="0.6" r="4.8" fill="#202020"/><ellipse cx="0" cy="2.2" rx="3.4" ry="3.6" fill="#f0b98a"/><path d="M-3.6 1Q-3 -2.8 0 -2.6Q3 -2.8 3.6 1Q2 -0.5 -3.6 1Z" fill="#202020"/></g></g><g transform="translate(54.12,317.98)"><g transform="translate(6.5,5.5) scale(0.85)"><path d="M-6.5 13Q-7 5.5 0 5.5Q7 5.5 6.5 13Z" fill="#40a040" stroke="#333" stroke-width="0.4"/><circle cx="0" cy="0.6" r="4.8" fill="#302010"/><ellipse cx="0" cy="2.2" rx="3.4" ry="3.6" fill="#f0b98a"/><path d="M-3.6 1Q-3 -2.8 0 -2.6Q3 -2.8 3.6 1Q2 -0.5 -3.6 1Z" fill="#302010"/></g><g transform="translate(13,9) scale(0.9)"><path d="M-6.5 13Q-7 5.5 0 5.5Q7 5.5 6.5 13Z" fill="#3080c0" stroke="#333" stroke-width="0.4"/><circle cx="0" cy="0.6" r="4.8" fill="#8a5020"/><ellipse cx="0" cy="2.2" rx="3.4" ry="3.6" fill="#f0b98a"/><path d="M-3.6 1Q-3 -2.8 0 -2.6Q3 -2.8 3.6 1Q2 -0.5 -3.6 1Z" fill="#8a5020"/></g></g><g transform="translate(79.43,317.98)"><g transform="translate(6.5,5.5) scale(0.85)"><path d="M-6.5 13Q-7 5.5 0 5.5Q7 5.5 6.5 13Z" fill="#2050c0" stroke="#333" stroke-width="0.4"/><circle cx="0" cy="0.6" r="4.8" fill="#202020"/><ellipse cx="0" cy="2.2" rx="3.4" ry="3.6" fill="#f0b98a"/><path d="M-3.6 1Q-3 -2.8 0 -2.6Q3 -2.8 3.6 1Q2 -0.5 -3.6 1Z" fill="#202020"/></g><g transform="translate(13.5,9) scale(0.9)"><path d="M-6.5 13Q-7 5.5 0 5.5Q7 5.5 6.5 13Z" fill="#e03030" stroke="#333" stroke-width="0.4"/><path d="M-5 5Q-6 -4.5 0 -4.5Q6 -4.5 5 5Z" fill="#f0c040" stroke="#5a2a10" stroke-width="0.4"/><ellipse cx="0" cy="2.2" rx="3.4" ry="3.6" fill="#f0b98a"/><path d="M-3.6 1Q-3 -2.8 0 -2.6Q3 -2.8 3.6 1Q2 -0.5 -3.6 1Z" fill="#f0c040"/></g></g><g transform="translate(104.74,317.98)"><g transform="translate(5.5,6) scale(0.7)"><path d="M-6.5 13Q-7 5.5 0 5.5Q7 5.5 6.5 13Z" fill="#2050c0" stroke="#333" stroke-width="0.4"/><circle cx="0" cy="0.6" r="4.8" fill="#8a5020"/><ellipse cx="0" cy="2.2" rx="3.4" ry="3.6" fill="#f0b98a"/><path d="M-3.6 1Q-3 -2.8 0 -2.6Q3 -2.8 3.6 1Q2 -0.5 -3.6 1Z" fill="#8a5020"/></g><g transform="translate(14.5,6) scale(0.7)"><path d="M-6.5 13Q-7 5.5 0 5.5Q7 5.5 6.5 13Z" fill="#40a040" stroke="#333" stroke-width="0.4"/><circle cx="0" cy="0.6" r="4.8" fill="#202020"/><ellipse cx="0" cy="2.2" rx="3.4" ry="3.6" fill="#f0b98a"/><path d="M-3.6 1Q-3 -2.8 0 -2.6Q3 -2.8 3.6 1Q2 -0.5 -3.6 1Z" fill="#202020"/></g><g transform="translate(10,10) scale(0.8)"><path d="M-6.5 13Q-7 5.5 0 5.5Q7 5.5 6.5 13Z" fill="#a040a0" stroke="#333" stroke-width="0.4"/><path d="M-5 5Q-6 -4.5 0 -4.5Q6 -4.5 5 5Z" fill="#a02020" stroke="#5a2a10" stroke-width="0.4"/><ellipse cx="0" cy="2.2" rx="3.4" ry="3.6" fill="#f0b98a"/><path d="M-3.6 1Q-3 -2.8 0 -2.6Q3 -2.8 3.6 1Q2 -0.5 -3.6 1Z" fill="#a02020"/></g></g><g transform="translate(130.05,317.98)"><g fill="#40c040" stroke="#208020" stroke-width="0.6"><ellipse cx="10" cy="4.5" rx="2.6" ry="4.5" transform="rotate(0 10 10)"/><ellipse cx="10" cy="4.5" rx="2.6" ry="4.5" transform="rotate(40 10 10)"/><ellipse cx="10" cy="4.5" rx="2.6" ry="4.5" transform="rotate(80 10 10)"/><ellipse cx="10" cy="4.5" rx="2.6" ry="4.5" transform="rotate(120 10 10)"/><ellipse cx="10" cy="4.5" rx="2.6" ry="4.5" transform="rotate(160 10 10)"/><ellipse cx="10" cy="4.5" rx="2.6" ry="4.5" transform="rotate(200 10 10)"/><ellipse cx="10" cy="4.5" rx="2.6" ry="4.5" transform="rotate(240 10 10)"/><ellipse cx="10" cy="4.5" rx="2.6" ry="4.5" transform="rotate(280 10 10)"/><ellipse cx="10" cy="4.5" rx="2.6" ry="4.5" transform="rotate(320 10 10)"/></g><circle cx="10" cy="10" r="2.5" fill="#f0d020"/></g><g transform="translate(155.36,317.98)"><ellipse cx="10" cy="11" rx="6" ry="8" fill="#111"/><ellipse cx="10" cy="13" rx="4" ry="5.5" fill="#fff"/><circle cx="10" cy="4.5" r="3.5" fill="#111"/><path d="M8.5 6L10 7.5L11.5 6Z" fill="#f0c020"/><ellipse cx="5" cy="18.5" rx="3.5" ry="1.5" fill="#f0c020"/><ellipse cx="15" cy="18.5" rx="3.5" ry="1.5" fill="#f0c020"/></g><g transform="translate(180.67,317.98)"><path d="M10 9Q3 0 1 4Q1 9 6 10Q2 13 4 17Q7 18 10 12Q13 18 16 17Q18 13 14 10Q19 9 19 4Q17 0 10 9Z" fill="#f08830" stroke="#a04010" stroke-width="0.6"/><path d="M10 6V16" stroke="#402010" stroke-width="1.2"/></g><g transform="translate(205.98,317.98)"><ellipse cx="7" cy="13" rx="5.5" ry="5" fill="#f0d040" stroke="#222" stroke-width="0.8"/><path d="M3 11L11 11M2.5 14H11.5" stroke="#222" stroke-width="1.2"/><circle cx="14.5" cy="7" r="3.5" fill="#111"/><ellipse cx="11" cy="4.5" rx="3.5" ry="3" fill="#fff" stroke="#444" stroke-width="0.6"/><ellipse cx="15" cy="13" rx="3.5" ry="3" fill="#fff" stroke="#444" stroke-width="0.6"/><path d="M16 4L18.5 1" stroke="#111" stroke-width="0.9"/></g><g transform="translate(3.50,340.71)"><rect x="1.5" y="1.5" width="17" height="17" rx="1.5" fill="#f8e8d0" stroke="#5090e0" stroke-width="1.6"/><path d="M10 4V10L6 14" stroke="#b02020" stroke-width="1.2" fill="none"/><path d="M10 10L14 7" stroke="#333" stroke-width="1"/></g><g transform="translate(28.81,340.71)"><path d="M2 3L17 2L18.5 17L3.5 18.5Z" fill="#f8f040" stroke="#909020" stroke-width="0.8"/><circle cx="10" cy="3.5" r="2.8" fill="#30c030"/></g><g transform="translate(54.12,340.71)"><path d="M5 1.5H15M5 18.5H15" stroke="#806040" stroke-width="1.8"/><path d="M6 2.5H14Q14 7.5 10 10Q14 12.5 14 17.5H6Q6 12.5 10 10Q6 7.5 6 2.5Z" fill="#dceaf8" stroke="#7090b0" stroke-width="0.7"/><path d="M7.5 16.5H12.5L10 13Z" fill="#e0b040"/></g><g transform="translate(79.43,340.71)"><rect x="1.5" y="3" width="17" height="15.5" fill="#dfe6f8" stroke="#6a7ab8" stroke-width="0.8"/><path d="M4 1.5V4.5M8 1.5V4.5M12 1.5V4.5M16 1.5V4.5" stroke="#c06020" stroke-width="1.2"/><text x="10" y="15.5" font-family="Liberation Serif" font-weight="bold" font-size="10.5" text-anchor="middle" fill="#c02020">12</text></g><g transform="translate(104.74,340.71)"><path d="M15 6L7.5 14Q5.5 16 4 14.5Q2.5 13 4.5 11L12.5 3Q15 0.5 17 2.5Q19 4.5 16.5 7L9 15" fill="none" stroke="#2a4a5a" stroke-width="1.8"/></g><g transform="translate(130.05,340.71)"><rect x="1" y="5" width="18" height="14" rx="1" fill="#1f5aa8" stroke="#0e2a60" stroke-width="0.8"/><path d="M7 5V2.5H13V5" fill="none" stroke="#6a4020" stroke-width="1.5"/><rect x="9" y="9" width="2" height="3" fill="#e0b040"/></g><g transform="translate(155.36,340.71)"><rect x="2.5" y="1" width="15" height="18" fill="#fff" stroke="#5a8ad0" stroke-width="0.9"/><g fill="#d04040"><circle cx="5.5" cy="5" r="1"/><circle cx="5.5" cy="9" r="1"/><circle cx="5.5" cy="13" r="1"/></g><path d="M8 5H15M8 9H15M8 13H15M8 16H15" stroke="#3a70c0" stroke-width="1.3"/></g><g transform="translate(180.67,340.71)"><path d="M2.5 1H13L16.5 4.5V19H2.5Z" fill="#fafafa" stroke="#a0a0a0" stroke-width="0.8"/><path d="M6 16L7 12L15 2L17 4L9 14Z" fill="#f0b030" stroke="#805010" stroke-width="0.5"/><path d="M6 16L7 12L9 14Z" fill="#444"/></g><g transform="translate(205.98,340.71)"><path d="M3 17Q1 14 3 12L6 14Q7 13 13 7Q12 5 13 4L16.5 1.5Q19 3 18.5 6Q14 14 7 18.5Q4.5 19.5 3 17Z" fill="#1f5fc8" stroke="#0e3a80" stroke-width="0.6"/></g><g transform="translate(3.50,363.44)"><path d="M1 4H7L9 6H18V17H1Z" fill="#4a8ae0"/><path d="M1 8H19L18 18H1Z" fill="#8ab8f0" stroke="#2a60b0" stroke-width="0.7"/><rect x="6" y="12" width="8" height="1.5" fill="#fff"/></g><g transform="translate(28.81,363.44)"><path d="M1 14L8 1L19 5V18H1Z" fill="#d8a060"/><path d="M2 13L8 2L11 10Z" fill="#e0e0e0" stroke="#777" stroke-width="0.6"/><rect x="0.5" y="15" width="19" height="4.5" fill="#4a7aa8"/></g><g transform="translate(54.12,363.44)"><rect x="1" y="3.5" width="18" height="13" fill="#f0f0ea" stroke="#888" stroke-width="1"/><path d="M1 3.5L10 11L19 3.5M1 16.5L8 9.5M19 16.5L12 9.5" fill="none" stroke="#888" stroke-width="0.9"/></g><g transform="translate(79.43,363.44)"><rect x="3" y="1.5" width="14" height="17" rx="5" fill="#fff" stroke="#1a3ad8" stroke-width="1.8"/><text x="10" y="14.5" font-family="Liberation Sans" font-weight="bold" font-size="11" text-anchor="middle" fill="#1a3ad8">R</text><path d="M1.5 11L3 8.5L4.5 11ZM15.5 9L17 11.5L18.5 9Z" fill="#1a3ad8"/></g><g transform="translate(104.74,363.44)"><rect x="3" y="1.5" width="14" height="17" rx="5" fill="#fff" stroke="#1a9a2a" stroke-width="1.8"/><text x="10" y="14.5" font-family="Liberation Sans" font-weight="bold" font-size="11" text-anchor="middle" fill="#1a9a2a">R</text><path d="M1.5 11L3 8.5L4.5 11ZM15.5 9L17 11.5L18.5 9Z" fill="#1a9a2a"/></g><g transform="translate(130.05,363.44)"><rect x="3" y="1.5" width="14" height="17" rx="5" fill="#fff" stroke="#8a2ad8" stroke-width="1.8"/><text x="10" y="14.5" font-family="Liberation Sans" font-weight="bold" font-size="11" text-anchor="middle" fill="#8a2ad8">R</text><path d="M1.5 11L3 8.5L4.5 11ZM15.5 9L17 11.5L18.5 9Z" fill="#8a2ad8"/></g><g transform="translate(155.36,363.44)"><rect x="3" y="1.5" width="14" height="17" rx="5" fill="#fff" stroke="#e02020" stroke-width="1.8"/><text x="10" y="14.5" font-family="Liberation Sans" font-weight="bold" font-size="11" text-anchor="middle" fill="#e02020">R</text><path d="M1.5 11L3 8.5L4.5 11ZM15.5 9L17 11.5L18.5 9Z" fill="#e02020"/></g><g transform="translate(180.67,363.44)"><rect x="1" y="1.5" width="18" height="17" fill="#2a4a4a"/><rect x="2.5" y="4" width="15" height="12" fill="#a8b8c0"/><path d="M8 7V13L13 10Z" fill="#111"/><rect x="2.0" y="2" width="1.6" height="1.2" fill="#fff"/><rect x="2.0" y="16.8" width="1.6" height="1.2" fill="#fff"/><rect x="5.2" y="2" width="1.6" height="1.2" fill="#fff"/><rect x="5.2" y="16.8" width="1.6" height="1.2" fill="#fff"/><rect x="8.4" y="2" width="1.6" height="1.2" fill="#fff"/><rect x="8.4" y="16.8" width="1.6" height="1.2" fill="#fff"/><rect x="11.600000000000001" y="2" width="1.6" height="1.2" fill="#fff"/><rect x="11.600000000000001" y="16.8" width="1.6" height="1.2" fill="#fff"/><rect x="14.8" y="2" width="1.6" height="1.2" fill="#fff"/><rect x="14.8" y="16.8" width="1.6" height="1.2" fill="#fff"/></g><g transform="translate(205.98,363.44)"><path d="M1 7H5L11 2V18L5 13H1Z" fill="#909090" stroke="#555" stroke-width="0.6"/><path d="M13.5 6Q15.5 10 13.5 14M16 3.5Q19.5 10 16 16.5" fill="none" stroke="#2a5ac0" stroke-width="1.4"/></g><g transform="translate(3.50,386.17)"><g fill="#8aaae0" stroke="#4a6aa8" stroke-width="0.7"><rect x="8.3" y="0.8" width="3.4" height="5" transform="rotate(0 10 10)"/><rect x="8.3" y="0.8" width="3.4" height="5" transform="rotate(45 10 10)"/><rect x="8.3" y="0.8" width="3.4" height="5" transform="rotate(90 10 10)"/><rect x="8.3" y="0.8" width="3.4" height="5" transform="rotate(135 10 10)"/><rect x="8.3" y="0.8" width="3.4" height="5" transform="rotate(180 10 10)"/><rect x="8.3" y="0.8" width="3.4" height="5" transform="rotate(225 10 10)"/><rect x="8.3" y="0.8" width="3.4" height="5" transform="rotate(270 10 10)"/><rect x="8.3" y="0.8" width="3.4" height="5" transform="rotate(315 10 10)"/><circle cx="10" cy="10" r="6.5"/></g><circle cx="10" cy="10" r="2.8" fill="#f0f0f0" stroke="#4a6aa8" stroke-width="0.7"/></g><g transform="translate(28.81,386.17)"><rect x="1.5" y="2" width="17" height="16" fill="#b8b8b8" stroke="#777" stroke-width="0.8"/><rect x="3" y="3.5" width="14" height="13" fill="#7ab8e8"/><path d="M3 13Q8 8 17 11V16.5H3Z" fill="#3a9a4a"/><circle cx="7" cy="7" r="1.8" fill="#f8f0a0"/></g><g transform="translate(54.12,386.17)"><defs><radialGradient id="g23" cx="0.35" cy="0.3" r="0.8"><stop offset="0" stop-color="#9fd0ff"/><stop offset="1" stop-color="#2060b0"/></radialGradient></defs><circle cx="10" cy="10" r="9" fill="url(#g23)"/><path d="M5 4Q8 3 9 6Q7 8 8 10Q5 9 4 7Z M11 9Q15 9 15 13Q13 17 11 15Z" fill="#3a9a3a"/></g><g transform="translate(79.43,386.17)"><defs><radialGradient id="g24" cx="0.35" cy="0.3" r="0.8"><stop offset="0" stop-color="#9fd0ff"/><stop offset="1" stop-color="#2060b0"/></radialGradient></defs><circle cx="10" cy="10" r="9" fill="url(#g24)"/><path d="M5 4Q8 3 9 6Q7 8 8 10Q5 9 4 7Z M11 9Q15 9 15 13Q13 17 11 15Z" fill="#3a9a3a"/><path d="M14 9L20 19H8Z" fill="#fcd030" stroke="#a07000" stroke-width="0.7"/><rect x="13.4" y="12" width="1.2" height="4" fill="#111"/></g><g transform="translate(104.74,386.17)"><circle cx="10" cy="10" r="3.3" fill="#fff" stroke="#a060d0" stroke-width="1"/><path d="M10 10L4 4M10 10L16 4M10 10L4 16M10 10L16 16M10 10H2M10 10H18" stroke="#e06080" stroke-width="0.7"/><g fill="#fff" stroke-width="0.8"><rect x="0.5" y="1.5" width="5" height="3" stroke="#e04040"/><rect x="14.5" y="1.5" width="5" height="3" stroke="#4090e0"/><rect x="0.5" y="8.5" width="4" height="3" stroke="#40a040"/><rect x="15.5" y="8.5" width="4" height="3" stroke="#e0a030"/><rect x="0.5" y="15.5" width="5" height="3" stroke="#e040e0"/><rect x="14.5" y="15.5" width="5" height="3" stroke="#40a040"/></g></g><g transform="translate(130.05,386.17)"><path d="M3 19V8Q3 1.5 10 1.5Q17 1.5 17 8V12Q17 18.5 10 18.5" fill="none" stroke="#0a1a70" stroke-width="3.5"/><ellipse cx="10.5" cy="10.5" rx="4.3" ry="5.5" fill="#f0b8a0"/></g><g transform="translate(155.36,386.17)"><path d="M9.8 2.5Q6 3 4 4.5Q2 5.5 0.6 5.8Q0.8 9 2.5 11.5Q3 14 3.2 17.5Q6 13.8 9 13Q12 12 13.6 11Z" fill="#fff" stroke="#222" stroke-width="0.8"/><path d="M1.6 9.6Q6 9.5 8.5 8.3Q11 7 12 7.2L13.6 11Q12 12 9 13Q6 13.8 3.2 17.5Q3 14 2.5 11.5Z" fill="#111" stroke="#222" stroke-width="0.6"/><path d="M9.3 1.2L19.5 19.8" stroke="#111" stroke-width="1.3"/><circle cx="9.4" cy="1.4" r="1" fill="#c01010"/></g><g transform="translate(180.67,386.17)"><path d="M9.8 2.5Q6 3 4 4.5Q2 5.5 0.6 5.8Q0.8 9 2.5 11.5Q3 14 3.2 17.5Q6 13.8 9 13Q12 12 13.6 11Z" fill="#fff" stroke="#222" stroke-width="0.8"/><path d="M1.6 9.6Q6 9.5 8.5 8.3Q11 7 12 7.2L13.6 11Q12 12 9 13Q6 13.8 3.2 17.5Q3 14 2.5 11.5Z" fill="#2040c0" stroke="#222" stroke-width="0.6"/><path d="M9.3 1.2L19.5 19.8" stroke="#111" stroke-width="1.3"/><circle cx="9.4" cy="1.4" r="1" fill="#c01010"/></g><g transform="translate(205.98,386.17)"><path d="M9.8 2.5Q6 3 4 4.5Q2 5.5 0.6 5.8Q0.8 9 2.5 11.5Q3 14 3.2 17.5Q6 13.8 9 13Q12 12 13.6 11Z" fill="#fff" stroke="#222" stroke-width="0.8"/><path d="M1.6 9.6Q6 9.5 8.5 8.3Q11 7 12 7.2L13.6 11Q12 12 9 13Q6 13.8 3.2 17.5Q3 14 2.5 11.5Z" fill="#30b030" stroke="#222" stroke-width="0.6"/><path d="M9.3 1.2L19.5 19.8" stroke="#111" stroke-width="1.3"/><circle cx="9.4" cy="1.4" r="1" fill="#c01010"/></g><g transform="translate(3.50,408.90)"><path d="M9.8 2.5Q6 3 4 4.5Q2 5.5 0.6 5.8Q0.8 9 2.5 11.5Q3 14 3.2 17.5Q6 13.8 9 13Q12 12 13.6 11Z" fill="#fff" stroke="#222" stroke-width="0.8"/><path d="M1.6 9.6Q6 9.5 8.5 8.3Q11 7 12 7.2L13.6 11Q12 12 9 13Q6 13.8 3.2 17.5Q3 14 2.5 11.5Z" fill="#f07020" stroke="#222" stroke-width="0.6"/><path d="M9.3 1.2L19.5 19.8" stroke="#111" stroke-width="1.3"/><circle cx="9.4" cy="1.4" r="1" fill="#c01010"/></g><g transform="translate(28.81,408.90)"><path d="M9.8 2.5Q6 3 4 4.5Q2 5.5 0.6 5.8Q0.8 9 2.5 11.5Q3 14 3.2 17.5Q6 13.8 9 13Q12 12 13.6 11Z" fill="#fff" stroke="#222" stroke-width="0.8"/><path d="M1.6 9.6Q6 9.5 8.5 8.3Q11 7 12 7.2L13.6 11Q12 12 9 13Q6 13.8 3.2 17.5Q3 14 2.5 11.5Z" fill="#9030c0" stroke="#222" stroke-width="0.6"/><path d="M9.3 1.2L19.5 19.8" stroke="#111" stroke-width="1.3"/><circle cx="9.4" cy="1.4" r="1" fill="#c01010"/></g><g transform="translate(54.12,408.90)"><path d="M9.8 2.5Q6 3 4 4.5Q2 5.5 0.6 5.8Q0.8 9 2.5 11.5Q3 14 3.2 17.5Q6 13.8 9 13Q12 12 13.6 11Z" fill="#fff" stroke="#222" stroke-width="0.8"/><path d="M1.6 9.6Q6 9.5 8.5 8.3Q11 7 12 7.2L13.6 11Q12 12 9 13Q6 13.8 3.2 17.5Q3 14 2.5 11.5Z" fill="#d02020" stroke="#222" stroke-width="0.6"/><path d="M9.3 1.2L19.5 19.8" stroke="#111" stroke-width="1.3"/><circle cx="9.4" cy="1.4" r="1" fill="#c01010"/></g><g transform="translate(79.43,408.90)"><path d="M9.8 2.5Q6 3 4 4.5Q2 5.5 0.6 5.8Q0.8 9 2.5 11.5Q3 14 3.2 17.5Q6 13.8 9 13Q12 12 13.6 11Z" fill="#fff" stroke="#222" stroke-width="0.8"/><path d="M1.6 9.6Q6 9.5 8.5 8.3Q11 7 12 7.2L13.6 11Q12 12 9 13Q6 13.8 3.2 17.5Q3 14 2.5 11.5Z" fill="#f0e020" stroke="#222" stroke-width="0.6"/><path d="M9.3 1.2L19.5 19.8" stroke="#111" stroke-width="1.3"/><circle cx="9.4" cy="1.4" r="1" fill="#c01010"/></g><g transform="translate(104.74,408.90)"><defs><linearGradient id="g25" x1="0" y1="0.3" x2="1" y2="0.7"><stop offset="0" stop-color="#1f5fbf"/><stop offset="1" stop-color="#b8d4f4"/></linearGradient></defs><g transform="rotate(0 10 10)"><path d="M1 6.5H10V1.5L19 10L10 18.5V13.5H1Z" fill="url(#g25)" stroke="#3a6fc0" stroke-width="0.6"/></g></g><g transform="translate(130.05,408.90)"><defs><linearGradient id="g26" x1="0" y1="0.3" x2="1" y2="0.7"><stop offset="0" stop-color="#1f5fbf"/><stop offset="1" stop-color="#b8d4f4"/></linearGradient></defs><g transform="rotate(180 10 10)"><path d="M1 6.5H10V1.5L19 10L10 18.5V13.5H1Z" fill="url(#g26)" stroke="#3a6fc0" stroke-width="0.6"/></g></g><g transform="translate(155.36,408.90)"><defs><linearGradient id="g27" x1="0" y1="0.3" x2="1" y2="0.7"><stop offset="0" stop-color="#1f5fbf"/><stop offset="1" stop-color="#b8d4f4"/></linearGradient></defs><g transform="rotate(-90 10 10)"><path d="M1 6.5H10V1.5L19 10L10 18.5V13.5H1Z" fill="url(#g27)" stroke="#3a6fc0" stroke-width="0.6"/></g></g><g transform="translate(180.67,408.90)"><defs><linearGradient id="g28" x1="0" y1="0.3" x2="1" y2="0.7"><stop offset="0" stop-color="#1f5fbf"/><stop offset="1" stop-color="#b8d4f4"/></linearGradient></defs><g transform="rotate(90 10 10)"><path d="M1 6.5H10V1.5L19 10L10 18.5V13.5H1Z" fill="url(#g28)" stroke="#3a6fc0" stroke-width="0.6"/></g></g><g transform="translate(205.98,408.90)"><path d="M7.5 1H12.5V7.5H19V12.5H12.5V19H7.5V12.5H1V7.5H7.5Z" fill="#1a60d0"/></g><g transform="translate(3.50,431.63)"><rect x="1" y="7.5" width="18" height="5" fill="#1a60d0"/></g><g transform="translate(28.81,431.63)"><path d="M1.5 2H6.5L10 7L13.5 2H18.5L12.8 10L18.5 18H13.5L10 13L6.5 18H1.5L7.2 10Z" fill="#1a60d0"/></g><g transform="translate(54.12,431.63)"><rect x="1" y="8.5" width="18" height="3" fill="#1a60d0"/><circle cx="10" cy="4" r="1.8" fill="#1a60d0"/><circle cx="10" cy="16" r="1.8" fill="#1a60d0"/></g><g transform="translate(79.43,431.63)"><path d="M5 7L15 10L5 13Z" fill="#e01010"/></g><g transform="translate(104.74,431.63)"><path d="M5 7L15 10L5 13Z" fill="#20a020"/></g><g transform="translate(130.05,431.63)"><text x="10" y="16.27" font-family="Liberation Sans" font-weight="normal" font-style="normal" font-size="19" text-anchor="middle" fill="#a09010">@</text></g><g transform="translate(155.36,431.63)"><rect x="8" y="3" width="11" height="14" fill="#fff" stroke="#2a7a40" stroke-width="0.8"/><path d="M10 7H17M10 10H17M10 13H17" stroke="#2a7a40" stroke-width="0.9"/><rect x="1" y="2" width="12" height="16" rx="1" fill="#2a7a40"/><text x="7" y="14" font-family="Liberation Sans" font-weight="bold" font-size="11" text-anchor="middle" fill="#fff">P</text></g><g transform="translate(180.67,431.63)"><rect x="8" y="3" width="11" height="14" fill="#fff" stroke="#2a5aa8" stroke-width="0.8"/><path d="M10 7H17M10 10H17M10 13H17" stroke="#2a5aa8" stroke-width="0.9"/><rect x="1" y="2" width="12" height="16" rx="1" fill="#2a5aa8"/><text x="7" y="14" font-family="Liberation Sans" font-weight="bold" font-size="11" text-anchor="middle" fill="#fff">W</text></g><g transform="translate(205.98,431.63)"><rect x="8" y="3" width="11" height="14" fill="#fff" stroke="#8a3aa8" stroke-width="0.8"/><path d="M10 7H17M10 10H17M10 13H17" stroke="#8a3aa8" stroke-width="0.9"/><rect x="1" y="2" width="12" height="16" rx="1" fill="#8a3aa8"/><text x="7" y="14" font-family="Liberation Sans" font-weight="bold" font-size="11" text-anchor="middle" fill="#fff">N</text></g><g transform="translate(3.50,454.36)"><rect x="8" y="3" width="11" height="14" fill="#fff" stroke="#1a70c8" stroke-width="0.8"/><path d="M10 7H17M10 10H17M10 13H17" stroke="#1a70c8" stroke-width="0.9"/><rect x="1" y="2" width="12" height="16" rx="1" fill="#1a70c8"/><text x="7" y="14" font-family="Liberation Sans" font-weight="bold" font-size="11" text-anchor="middle" fill="#fff">O</text></g><g transform="translate(28.81,454.36)"><rect x="8" y="3" width="11" height="14" fill="#fff" stroke="#a83030" stroke-width="0.8"/><path d="M10 7H17M10 10H17M10 13H17" stroke="#a83030" stroke-width="0.9"/><rect x="1" y="2" width="12" height="16" rx="1" fill="#a83030"/><text x="7" y="14" font-family="Liberation Sans" font-weight="bold" font-size="11" text-anchor="middle" fill="#fff">A</text></g><g transform="translate(54.12,454.36)"><rect x="8" y="3" width="11" height="14" fill="#fff" stroke="#d04a2a" stroke-width="0.8"/><path d="M10 7H17M10 10H17M10 13H17" stroke="#d04a2a" stroke-width="0.9"/><rect x="1" y="2" width="12" height="16" rx="1" fill="#d04a2a"/><text x="7" y="14" font-family="Liberation Sans" font-weight="bold" font-size="11" text-anchor="middle" fill="#fff">P</text></g><g transform="translate(79.43,454.36)"><rect x="8" y="3" width="11" height="14" fill="#fff" stroke="#2a50a0" stroke-width="0.8"/><path d="M10 7H17M10 10H17M10 13H17" stroke="#2a50a0" stroke-width="0.9"/><rect x="1" y="2" width="12" height="16" rx="1" fill="#2a50a0"/><text x="7" y="14" font-family="Liberation Sans" font-weight="bold" font-size="11" text-anchor="middle" fill="#fff">V</text></g><g transform="translate(104.74,454.36)"><rect x="8" y="3" width="11" height="14" fill="#fff" stroke="#208040" stroke-width="0.8"/><path d="M10 7H17M10 10H17M10 13H17" stroke="#208040" stroke-width="0.9"/><rect x="1" y="2" width="12" height="16" rx="1" fill="#208040"/><text x="7" y="14" font-family="Liberation Sans" font-weight="bold" font-size="11" text-anchor="middle" fill="#fff">X</text></g><g transform="translate(130.05,454.36)"><path d="M10 0.5L18.5 5.3V14.7L10 19.5L1.5 14.7V5.3Z" fill="#d860a0"/><path d="M6 12Q9 6 13 8Q11 12 8 14" fill="none" stroke="#fff" stroke-width="1.2"/></g><g transform="translate(155.36,454.36)"><path d="M3.5 0.8H13L16.5 4.3V19.2H3.5Z" fill="#f4f4f0" stroke="#b0b0b0" stroke-width="0.8"/><path d="M13 0.8V4.3H16.5" fill="#ddd" stroke="#b0b0b0" stroke-width="0.6"/><text x="10" y="11.5" font-family="Liberation Mono" font-weight="bold" font-size="7" text-anchor="middle" fill="#2a4ad0">&lt;/&gt;</text><rect x="3.5" y="14.2" width="13" height="5" fill="#2a4ad0"/><text x="10" y="18.5" font-family="Liberation Sans" font-weight="bold" font-size="4.6" text-anchor="middle" fill="#fff">XSD</text></g><g transform="translate(180.67,454.36)"><path d="M2 4L15 1L18 15L5 18Z" fill="#4aa0f0"/><path d="M10 16L15 6" stroke="#111" stroke-width="2"/></g><g transform="translate(205.98,454.36)"><path d="M2 1H18L16.5 17L10 19L3.5 17Z" fill="#f0d020"/><text x="10" y="14" font-family="Liberation Sans" font-weight="bold" font-size="9" text-anchor="middle" fill="#222">JS</text></g><g transform="translate(3.50,477.09)"><text x="10" y="14.5" font-family="Liberation Sans" font-weight="bold" font-style="normal" font-size="12.5" text-anchor="middle" fill="#2a7ad0">TS</text></g><g transform="translate(28.81,477.09)"><path d="M10 1Q4 1 4 4V7H10V8H3Q1 8 1 11Q1 14 3 14H5V11Q5 9.5 7 9.5H13Q15 9.5 15 8V4Q15 1 10 1Z" fill="#3a70b0"/><path d="M10 19Q16 19 16 16V13H10V12H17Q19 12 19 9Q19 6 17 6H15V9Q15 10.5 13 10.5H7Q5 10.5 5 12V16Q5 19 10 19Z" fill="#f0d030"/></g><g transform="translate(54.12,477.09)"><rect x="1" y="1" width="18" height="18" rx="3.5" fill="#f05030"/><path d="M4 11Q8 15 12 13Q15 12 16 15Q17 9 13 5Q14 9 12 10Q8 8 5 5Q8 9 9 10Q6 9 4 11Z" fill="#fff"/></g><g transform="translate(79.43,477.09)"><path d="M3.5 0.8H13L16.5 4.3V19.2H3.5Z" fill="#f4f4f0" stroke="#b0b0b0" stroke-width="0.8"/><path d="M13 0.8V4.3H16.5" fill="#ddd" stroke="#b0b0b0" stroke-width="0.6"/><path d="M6 7H13V11Q13 13 9.5 13Q6 13 6 11Z" fill="#222"/><path d="M8 3Q9 5 10 3" stroke="#444" stroke-width="0.7" fill="none"/><rect x="3.5" y="14.2" width="13" height="5" fill="#6a2aa0"/><text x="10" y="18.5" font-family="Liberation Sans" font-weight="bold" font-size="4.6" text-anchor="middle" fill="#fff">JAVA</text></g><g transform="translate(104.74,477.09)"><circle cx="10" cy="10" r="9" fill="#f8f0e0"/><path d="M10 10L10 1A9 9 0 0 1 19 10Z" fill="#f8b020"/><path d="M10 10L19 10A9 9 0 0 1 10 19Z" fill="#f03030"/><path d="M10 10L10 19A9 9 0 0 1 2 14Z" fill="#f8f0e0"/><path d="M10 10L1 10A9 9 0 0 1 4 3Z" fill="#30a0e0"/></g><g transform="translate(130.05,477.09)"><path d="M3 17L14 3Q17 0.5 18.5 3L7 18Z" fill="#fff" stroke="#888" stroke-width="0.6"/><path d="M4 14L13 5L15.5 8L6.5 17Z" fill="#e05050"/><path d="M5.5 15.5L14 7" stroke="#40a0e0" stroke-width="1.2"/><path d="M7 16.5L15 8.5" stroke="#f0b030" stroke-width="1.2"/></g><g transform="translate(155.36,477.09)"><path d="M10 0.5L18.5 5.3V14.7L10 19.5L1.5 14.7V5.3Z" fill="#2a5aa8"/><path d="M13 7Q11.5 5.5 9.5 5.5Q5.5 5.5 5.5 10Q5.5 14.5 9.5 14.5Q11.5 14.5 13 13" fill="none" stroke="#fff" stroke-width="2.2"/></g><g transform="translate(180.67,477.09)"><path d="M3.5 0.8H13L16.5 4.3V19.2H3.5Z" fill="#f4f4f0" stroke="#b0b0b0" stroke-width="0.8"/><path d="M13 0.8V4.3H16.5" fill="#ddd" stroke="#b0b0b0" stroke-width="0.6"/><text x="10" y="11.5" font-family="Liberation Mono" font-weight="bold" font-size="7" text-anchor="middle" fill="#c04a20">&lt;/&gt;</text><rect x="3.5" y="14.2" width="13" height="5" fill="#c04a20"/><text x="10" y="18.5" font-family="Liberation Sans" font-weight="bold" font-size="4.6" text-anchor="middle" fill="#fff">XML</text></g><g transform="translate(205.98,477.09)"><path d="M4 2H16Q18 2 18 4V15Q18 18 15 18H4Q2 18 2 16V4Q2 2 4 2Z" fill="#fff" stroke="#3a80d0" stroke-width="1.2"/><path d="M6 6H14M6 9H14M6 12H12" stroke="#3a80d0" stroke-width="0.8"/></g><g transform="translate(3.50,499.82)"><circle cx="10" cy="10" r="9" fill="#fff" stroke="#ccc" stroke-width="0.6"/><path d="M6 13L9 6M9 13L12 6M12 13L14 10" stroke="#2a80e0" stroke-width="1.6"/></g><g transform="translate(28.81,499.82)"><path d="M10 1L19 10L10 19L1 10Z" fill="#f05030"/><path d="M8 5L13 10V14M10 7V14" stroke="#fff" stroke-width="1" fill="none"/></g><g transform="translate(54.12,499.82)"><rect x="1" y="1" width="18" height="18" rx="1.5" fill="#111" stroke="#d0a070" stroke-width="1"/><path d="M4 5H8V8H4ZM11 11H16V14H11Z M6 8V12.5H11" fill="none" stroke="#ccc" stroke-width="0.8"/></g><g transform="translate(79.43,499.82)"><rect x="1.5" y="1" width="17" height="18" rx="2" fill="#2a5ab8"/><rect x="3.5" y="4" width="13" height="11" fill="#fff"/><path d="M6 9.5L9 12L14 6.5" stroke="#111" stroke-width="1.4" fill="none"/><rect x="6" y="16" width="8" height="2" fill="#8ab0e0"/></g><g transform="translate(104.74,499.82)"><path d="M1 14Q10 20 19 14Q17 17 10 18Q3 17 1 14Z" fill="#a07040"/><path d="M6 14Q5 8 9 3Q8 8 11 9Q12 5 14 6Q13 10 14 14Z" fill="#f0b020"/></g><g transform="translate(130.05,499.82)"><circle cx="10" cy="10" r="7.5" fill="none" stroke="#1a90f0" stroke-width="3"/><path d="M13 13L18 18" stroke="#1a90f0" stroke-width="3"/><path d="M10 10L12 6" stroke="#1a90f0" stroke-width="1.5"/></g><g transform="translate(155.36,499.82)"><rect x="1.5" y="3" width="17" height="14" rx="2" fill="#e8f2fc" stroke="#8ab8e0" stroke-width="0.8"/><text x="10" y="13" font-family="Liberation Serif" font-style="italic" font-size="8" text-anchor="middle" fill="#3a80d0">mc</text></g><g transform="translate(180.67,499.82)"><defs><radialGradient id="g29" cx="0.35" cy="0.3" r="0.75"><stop offset="0" stop-color="#6a7ad0"/><stop offset="1" stop-color="#10104a"/></radialGradient></defs><circle cx="10" cy="10" r="9.3" fill="url(#g29)"/></g><g transform="translate(205.98,499.82)"><rect x="1" y="1" width="18" height="18" rx="2" fill="#40c070"/><path d="M10 10L4 4M10 10L16 5M10 10L5 16M10 10L16 15" stroke="#222" stroke-width="1.2"/><circle cx="10" cy="10" r="2.5" fill="#222"/></g><g transform="translate(3.50,522.55)"><circle cx="10" cy="10" r="9" fill="#d02828"/><path d="M5 15Q4 8 9 5Q13 4 15 8Q14 11 11 11Q12 14 10 16Z" fill="#fff"/></g><g transform="translate(28.81,522.55)"><rect x="1" y="1" width="18" height="18" fill="#3ab0f0"/><path d="M3 17L11 3L17 17Z" fill="none" stroke="#1a60b0" stroke-width="1"/></g><g transform="translate(54.12,522.55)"><rect x="1" y="1" width="18" height="18" fill="#c060e0"/><path d="M3 17L11 3L17 17ZM6 17L13 8" fill="none" stroke="#fff" stroke-width="0.7"/></g><g transform="translate(79.43,522.55)"><rect x="1" y="1" width="18" height="18" fill="#d0306a"/><rect x="2.5" y="2.5" width="15" height="15" fill="#4a0a24"/><text x="10" y="14" font-family="Liberation Sans" font-size="9" text-anchor="middle" fill="#f060a0">Id</text></g><g transform="translate(104.74,522.55)"><path d="M5 2H15L19.5 7.5L10 19L0.5 7.5Z" fill="#f8b020"/><path d="M0.5 7.5H19.5M10 19L6 7.5L10 2L14 7.5Z" fill="none" stroke="#f8d860" stroke-width="0.7"/></g><g transform="translate(130.05,522.55)"><rect x="1" y="1" width="18" height="18" fill="#f08a40"/><path d="M1 1L12 19M6 1L17 19M11 1L19 12" stroke="#c03030" stroke-width="1.3"/></g><g transform="translate(155.36,522.55)"><path d="M1 5H7L8.5 6.5H19V18H1Z" fill="#d89a40"/><path d="M1 9H19V18H1Z" fill="#f0c070"/></g><g transform="translate(180.67,522.55)"><path d="M2 3H8L9.5 4.5H18V16H2Z" fill="#f8e860"/><path d="M2 7H18V16H2Z" fill="#fff080"/><path d="M4 19H16M10 16V19" stroke="#999" stroke-width="1"/></g><g transform="translate(205.98,522.55)"><defs><radialGradient id="g30" cx="0.35" cy="0.3" r="0.8"><stop offset="0" stop-color="#9fd0ff"/><stop offset="1" stop-color="#2060b0"/></radialGradient></defs><circle cx="10" cy="10" r="9" fill="url(#g30)"/><path d="M5 4Q8 3 9 6Q7 8 8 10Q5 9 4 7Z M11 9Q15 9 15 13Q13 17 11 15Z" fill="#3a9a3a"/><rect x="1" y="8" width="8" height="6" fill="#f0c020" stroke="#806000" stroke-width="0.6"/><path d="M2.5 8V6Q5 3 7.5 6V8" fill="none" stroke="#555" stroke-width="1.1"/></g><g transform="translate(3.50,545.28)"><defs><radialGradient id="g31" cx="0.35" cy="0.3" r="0.8"><stop offset="0" stop-color="#9fd0ff"/><stop offset="1" stop-color="#2060b0"/></radialGradient></defs><circle cx="10" cy="10" r="9" fill="url(#g31)"/><path d="M5 4Q8 3 9 6Q7 8 8 10Q5 9 4 7Z M11 9Q15 9 15 13Q13 17 11 15Z" fill="#3a9a3a"/></g><g transform="translate(28.81,545.28)"><path d="M3.5 0.8H13L16.5 4.3V19.2H3.5Z" fill="#f4f4f0" stroke="#b0b0b0" stroke-width="0.8"/><path d="M13 0.8V4.3H16.5" fill="#ddd" stroke="#b0b0b0" stroke-width="0.6"/><path d="M4 14L8 9L11 12L13 10L16 14Z" fill="#60c060"/><circle cx="7" cy="5" r="1.3" fill="#f0d020"/><rect x="3.5" y="14.2" width="13" height="5" fill="#2a9a3a"/><text x="10" y="18.5" font-family="Liberation Sans" font-weight="bold" font-size="4.6" text-anchor="middle" fill="#fff">PNG</text></g><g transform="translate(54.12,545.28)"><path d="M3.5 0.8H13L16.5 4.3V19.2H3.5Z" fill="#f4f4f0" stroke="#b0b0b0" stroke-width="0.8"/><path d="M13 0.8V4.3H16.5" fill="#ddd" stroke="#b0b0b0" stroke-width="0.6"/><path d="M5 5H11M5 7H11M5 9H9" stroke="#888" stroke-width="0.7"/><circle cx="14" cy="14.5" r="5" fill="#3a80d0" stroke="#333" stroke-width="0.5"/><path d="M11.5 12Q13 11 14 13Q13 15 14 16Q12 16 11.5 14Z" fill="#40a040"/></g><g transform="translate(79.43,545.28)"><rect x="1" y="4.5" width="18" height="11" rx="1" fill="#fffde0" stroke="#f0e040" stroke-width="1.3"/><text x="10" y="13" font-family="Liberation Sans" font-weight="bold" font-size="8" text-anchor="middle" fill="#f0e040">M↓</text></g><g transform="translate(104.74,545.28)"><path d="M3.5 0.8H13L16.5 4.3V19.2H3.5Z" fill="#f4f4f0" stroke="#b0b0b0" stroke-width="0.8"/><path d="M13 0.8V4.3H16.5" fill="#ddd" stroke="#b0b0b0" stroke-width="0.6"/><path d="M7 4V12L13 8Z" fill="#111"/><rect x="3.5" y="14.2" width="13" height="5" fill="#e03030"/><text x="10" y="18.5" font-family="Liberation Sans" font-weight="bold" font-size="4.6" text-anchor="middle" fill="#fff">AVI</text></g><g transform="translate(130.05,545.28)"><path d="M3.5 0.8H13L16.5 4.3V19.2H3.5Z" fill="#f4f4f0" stroke="#b0b0b0" stroke-width="0.8"/><path d="M13 0.8V4.3H16.5" fill="#ddd" stroke="#b0b0b0" stroke-width="0.6"/><circle cx="8" cy="6" r="3" fill="#e02020"/><circle cx="12" cy="10" r="3" fill="#e02020"/><rect x="3.5" y="14.2" width="13" height="5" fill="#e02020"/><text x="10" y="18.5" font-family="Liberation Sans" font-weight="bold" font-size="4.6" text-anchor="middle" fill="#fff">CMD</text></g><g transform="translate(155.36,545.28)"><path d="M3.5 0.8H13L16.5 4.3V19.2H3.5Z" fill="#f4f4f0" stroke="#b0b0b0" stroke-width="0.8"/><path d="M13 0.8V4.3H16.5" fill="#ddd" stroke="#b0b0b0" stroke-width="0.6"/><circle cx="8" cy="6" r="3" fill="#e02020"/><circle cx="12" cy="10" r="3" fill="#e02020"/><rect x="3.5" y="14.2" width="13" height="5" fill="#e02020"/><text x="10" y="18.5" font-family="Liberation Sans" font-weight="bold" font-size="4.6" text-anchor="middle" fill="#fff">BAT</text></g><g transform="translate(180.67,545.28)"><path d="M3.5 0.8H13L16.5 4.3V19.2H3.5Z" fill="#f4f4f0" stroke="#b0b0b0" stroke-width="0.8"/><path d="M13 0.8V4.3H16.5" fill="#ddd" stroke="#b0b0b0" stroke-width="0.6"/><path d="M5 5H14M5 8H14M5 11H12" stroke="#999" stroke-width="1.2"/><rect x="3.5" y="14.2" width="13" height="5" fill="#2a9a3a"/><text x="10" y="18.5" font-family="Liberation Sans" font-weight="bold" font-size="4.6" text-anchor="middle" fill="#fff">TXT</text></g><g transform="translate(205.98,545.28)"><path d="M3.5 0.8H13L16.5 4.3V19.2H3.5Z" fill="#f4f4f0" stroke="#b0b0b0" stroke-width="0.8"/><path d="M13 0.8V4.3H16.5" fill="#ddd" stroke="#b0b0b0" stroke-width="0.6"/><path d="M8 5L6 8L8 11M12 5L14 8L12 11" fill="none" stroke="#f07030" stroke-width="1.1"/><rect x="3.5" y="14.2" width="13" height="5" fill="#f07030"/><text x="10" y="18.5" font-family="Liberation Sans" font-weight="bold" font-size="4.6" text-anchor="middle" fill="#fff">HTML</text></g><g transform="translate(3.50,568.01)"><ellipse cx="10" cy="5" rx="3.5" ry="4.5" fill="#f0a020" transform="rotate(0 10 10)"/><ellipse cx="10" cy="5" rx="3.5" ry="4.5" fill="#e03030" transform="rotate(60 10 10)"/><ellipse cx="10" cy="5" rx="3.5" ry="4.5" fill="#c040c0" transform="rotate(120 10 10)"/><ellipse cx="10" cy="5" rx="3.5" ry="4.5" fill="#3070e0" transform="rotate(180 10 10)"/><ellipse cx="10" cy="5" rx="3.5" ry="4.5" fill="#30b0e0" transform="rotate(240 10 10)"/><ellipse cx="10" cy="5" rx="3.5" ry="4.5" fill="#40c040" transform="rotate(300 10 10)"/><circle cx="10" cy="10" r="4" fill="#d8e8f8"/></g><g transform="translate(28.81,568.01)"><rect x="1" y="1" width="18" height="18" rx="1.5" fill="#d02020"/><path d="M4 16Q9 7 10 3Q11 7 16 14Q10 12 4 16Z" fill="none" stroke="#fff" stroke-width="1.2"/></g><g transform="translate(54.12,568.01)"><rect x="1.5" y="4.5" width="17" height="11" fill="#c0b060" stroke="#807020" stroke-width="0.8"/><path d="M1.5 4.5L10 11L18.5 4.5" fill="none" stroke="#807020" stroke-width="0.9"/></g><g transform="translate(79.43,568.01)"><path d="M3.5 0.8H13L16.5 4.3V19.2H3.5Z" fill="#f4f4f0" stroke="#b0b0b0" stroke-width="0.8"/><path d="M13 0.8V4.3H16.5" fill="#ddd" stroke="#b0b0b0" stroke-width="0.6"/><path d="M4 14L8 9L11 12L13 10L16 14Z" fill="#60c060"/><circle cx="7" cy="5" r="1.3" fill="#f0d020"/><rect x="3.5" y="14.2" width="13" height="5" fill="#2a9a3a"/><text x="10" y="18.5" font-family="Liberation Sans" font-weight="bold" font-size="4.6" text-anchor="middle" fill="#fff">PNG</text></g><g transform="translate(104.74,568.01)"><text x="10" y="16.27" font-family="Liberation Sans" font-weight="normal" font-style="normal" font-size="19" text-anchor="middle" fill="#a09010">@</text></g><g transform="translate(130.05,568.01)"><path d="M3.5 0.8H13L16.5 4.3V19.2H3.5Z" fill="#f4f4f0" stroke="#b0b0b0" stroke-width="0.8"/><path d="M13 0.8V4.3H16.5" fill="#ddd" stroke="#b0b0b0" stroke-width="0.6"/><text x="10" y="11" font-family="Liberation Mono" font-size="6.5" text-anchor="middle" fill="#a040e0">{:}</text><rect x="3.5" y="14.2" width="13" height="5" fill="#a040e0"/><text x="10" y="18.5" font-family="Liberation Sans" font-weight="bold" font-size="4.6" text-anchor="middle" fill="#fff">JSON</text></g><g transform="translate(155.36,568.01)"><path d="M3.5 0.8H13L16.5 4.3V19.2H3.5Z" fill="#f4f4f0" stroke="#b0b0b0" stroke-width="0.8"/><path d="M13 0.8V4.3H16.5" fill="#ddd" stroke="#b0b0b0" stroke-width="0.6"/><path d="M7 8L10 5L13 8L10 11" fill="none" stroke="#2a9a3a" stroke-width="1.6"/><rect x="3.5" y="14.2" width="13" height="5" fill="#2a9a3a"/><text x="10" y="18.5" font-family="Liberation Sans" font-weight="bold" font-size="4.6" text-anchor="middle" fill="#fff">ePUB</text></g><g transform="translate(180.67,568.01)"><path d="M3.5 0.8H13L16.5 4.3V19.2H3.5Z" fill="#f4f4f0" stroke="#b0b0b0" stroke-width="0.8"/><path d="M13 0.8V4.3H16.5" fill="#ddd" stroke="#b0b0b0" stroke-width="0.6"/><text x="10" y="11" font-family="Liberation Sans" font-size="7" text-anchor="middle" fill="#b04020">C:/</text><rect x="3.5" y="14.2" width="13" height="5" fill="#b04020"/><text x="10" y="18.5" font-family="Liberation Sans" font-weight="bold" font-size="4.6" text-anchor="middle" fill="#fff">EXE</text></g><g transform="translate(205.98,568.01)"><path d="M3.5 0.8H13L16.5 4.3V19.2H3.5Z" fill="#f4f4f0" stroke="#b0b0b0" stroke-width="0.8"/><path d="M13 0.8V4.3H16.5" fill="#ddd" stroke="#b0b0b0" stroke-width="0.6"/><path d="M5 8H12M10 6L12 8L10 10M14 5V11" fill="none" stroke="#111" stroke-width="1.4"/><rect x="3.5" y="14.2" width="13" height="5" fill="#6a20c0"/><text x="10" y="18.5" font-family="Liberation Sans" font-weight="bold" font-size="4.6" text-anchor="middle" fill="#fff">TSV</text></g><g transform="translate(3.50,590.74)"><path d="M3.5 0.8H13L16.5 4.3V19.2H3.5Z" fill="#f4f4f0" stroke="#b0b0b0" stroke-width="0.8"/><path d="M13 0.8V4.3H16.5" fill="#ddd" stroke="#b0b0b0" stroke-width="0.6"/><path d="M10 2V12" stroke="#666" stroke-width="1.2" stroke-dasharray="1 1"/><circle cx="10" cy="11" r="1.6" fill="none" stroke="#555" stroke-width="0.8"/><rect x="3.5" y="14.2" width="13" height="5" fill="#2a4ab0"/><text x="10" y="18.5" font-family="Liberation Sans" font-weight="bold" font-size="4.6" text-anchor="middle" fill="#fff">ZIP</text></g><g transform="translate(28.81,590.74)"><path d="M3.5 0.8H13L16.5 4.3V19.2H3.5Z" fill="#f4f4f0" stroke="#b0b0b0" stroke-width="0.8"/><path d="M13 0.8V4.3H16.5" fill="#ddd" stroke="#b0b0b0" stroke-width="0.6"/><path d="M5 6H8L12 3V12L8 9H5Z" fill="#111"/><rect x="3.5" y="14.2" width="13" height="5" fill="#d03030"/><text x="10" y="18.5" font-family="Liberation Sans" font-weight="bold" font-size="4.6" text-anchor="middle" fill="#fff">M4A</text></g><g transform="translate(54.12,590.74)"><path d="M3.5 0.8H13L16.5 4.3V19.2H3.5Z" fill="#f4f4f0" stroke="#b0b0b0" stroke-width="0.8"/><path d="M13 0.8V4.3H16.5" fill="#ddd" stroke="#b0b0b0" stroke-width="0.6"/><path d="M10 3V11" stroke="#111" stroke-width="1"/><ellipse cx="8.5" cy="11" rx="2" ry="1.5" fill="#111"/><path d="M10 3Q13 4 12 7" fill="none" stroke="#111" stroke-width="0.9"/><rect x="3.5" y="14.2" width="13" height="5" fill="#d03030"/><text x="10" y="18.5" font-family="Liberation Sans" font-weight="bold" font-size="4.6" text-anchor="middle" fill="#fff">MP3</text></g><g transform="translate(79.43,590.74)"><path d="M3.5 0.8H13L16.5 4.3V19.2H3.5Z" fill="#fff" stroke="#b0b0b0" stroke-width="0.8"/><path d="M13 0.8V4.3H16.5" fill="#ddd" stroke="#b0b0b0" stroke-width="0.6"/><path d="M6 6H14M6 8.5H14M6 11H14M6 13.5H12" stroke="#aaa" stroke-width="0.8"/></g><g transform="translate(104.74,590.74)"><path d="M3.5 0.8H13L16.5 4.3V19.2H3.5Z" fill="#f4f4f0" stroke="#b0b0b0" stroke-width="0.8"/><path d="M13 0.8V4.3H16.5" fill="#ddd" stroke="#b0b0b0" stroke-width="0.6"/><text x="10" y="11" font-family="Liberation Sans" font-size="7" text-anchor="middle" fill="#3090e0">{ }</text><rect x="3.5" y="14.2" width="13" height="5" fill="#3090e0"/><text x="10" y="18.5" font-family="Liberation Sans" font-weight="bold" font-size="4.6" text-anchor="middle" fill="#fff">CSS</text></g><g transform="translate(130.05,590.74)"><path d="M3.5 0.8H13L16.5 4.3V19.2H3.5Z" fill="#f4f4f0" stroke="#b0b0b0" stroke-width="0.8"/><path d="M13 0.8V4.3H16.5" fill="#ddd" stroke="#b0b0b0" stroke-width="0.6"/><path d="M11 5Q12 8 8 11" fill="none" stroke="#111" stroke-width="1.4"/><rect x="3.5" y="14.2" width="13" height="5" fill="#333"/><text x="10" y="18.5" font-family="Liberation Sans" font-weight="bold" font-size="4.6" text-anchor="middle" fill="#fff">CSV</text></g><g transform="translate(155.36,590.74)"><path d="M3 1H14L17.5 4.5V19H3Z" fill="#f6f6f6" stroke="#707070" stroke-width="1.2"/><path d="M14 1V4.5H17.5Z" fill="#707070"/><rect x="6" y="9" width="6" height="5" fill="#5090c0"/><circle cx="12" cy="13" r="2.5" fill="#3a70a0"/></g><g transform="translate(180.67,590.74)"><path d="M3 1H14L17.5 4.5V19H3Z" fill="#f6f6f6" stroke="#b05a30" stroke-width="1.2"/><path d="M14 1V4.5H17.5Z" fill="#b05a30"/><rect x="5.5" y="8" width="9" height="7" fill="#e8b080"/><circle cx="11" cy="11.5" r="2" fill="#60b060"/></g><g transform="translate(205.98,590.74)"><path d="M3 1H14L17.5 4.5V19H3Z" fill="#fff6d0" stroke="#c8a020" stroke-width="1.2"/><path d="M14 1V4.5H17.5Z" fill="#c8a020"/><circle cx="8" cy="11" r="2.5" fill="#f0a030"/><rect x="9" y="9" width="5" height="5" fill="#d8c040"/></g><g transform="translate(3.50,613.47)"><path d="M3 1H14L17.5 4.5V19H3Z" fill="#f6f6f6" stroke="#3aa040" stroke-width="1.2"/><path d="M14 1V4.5H17.5Z" fill="#3aa040"/><rect x="5" y="7" width="10" height="8" fill="#c8e8c0"/><path d="M5 9.5H15M5 12H15M8.5 7V15M12 7V15" stroke="#3aa040" stroke-width="0.6"/></g><g transform="translate(28.81,613.47)"><path d="M3 1H14L17.5 4.5V19H3Z" fill="#f6f6f6" stroke="#3aa040" stroke-width="1.2"/><path d="M14 1V4.5H17.5Z" fill="#3aa040"/><rect x="5" y="7" width="10" height="8" fill="#c8e8c0"/><path d="M5 9.5H15M5 12H15M8.5 7V15M12 7V15" stroke="#3aa040" stroke-width="0.6"/></g><g transform="translate(54.12,613.47)"><path d="M3 1H14L17.5 4.5V19H3Z" fill="#f6f6f6" stroke="#707070" stroke-width="1.2"/><path d="M14 1V4.5H17.5Z" fill="#707070"/><rect x="6" y="9" width="6" height="5" fill="#5090c0"/><circle cx="12" cy="13" r="2.5" fill="#3a70a0"/></g><g transform="translate(79.43,613.47)"><path d="M3 1H14L17.5 4.5V19H3Z" fill="#f6f6f6" stroke="#b05a30" stroke-width="1.2"/><path d="M14 1V4.5H17.5Z" fill="#b05a30"/><rect x="5.5" y="8" width="9" height="7" fill="#e8b080"/><circle cx="11" cy="11.5" r="2" fill="#60b060"/></g><g transform="translate(104.74,613.47)"><path d="M3 1H14L17.5 4.5V19H3Z" fill="#f6f6f6" stroke="#c8a020" stroke-width="1.2"/><path d="M14 1V4.5H17.5Z" fill="#c8a020"/><circle cx="8" cy="12" r="2.5" fill="#f0a030"/><rect x="9" y="8" width="5" height="5" fill="#d8c040"/></g><g transform="translate(130.05,613.47)"><path d="M3 1H14L17.5 4.5V19H3Z" fill="#f6f6f6" stroke="#2a70b0" stroke-width="1.2"/><path d="M14 1V4.5H17.5Z" fill="#2a70b0"/><rect x="5" y="8" width="10" height="6" fill="#a8c8e8"/><path d="M6 10H14M6 12H12" stroke="#2a5a90" stroke-width="0.7"/></g><g transform="translate(155.36,613.47)"><path d="M3 1H14L17.5 4.5V19H3Z" fill="#f6f6f6" stroke="#2a70b0" stroke-width="1.2"/><path d="M14 1V4.5H17.5Z" fill="#2a70b0"/><rect x="5" y="8" width="10" height="6" fill="#a8c8e8"/><path d="M6 10H14M6 12H12" stroke="#2a5a90" stroke-width="0.7"/></g><g transform="translate(180.67,613.47)"><path d="M3 1H14L17.5 4.5V19H3Z" fill="#f6f6f6" stroke="#9030b0" stroke-width="1.2"/><path d="M14 1V4.5H17.5Z" fill="#9030b0"/><rect x="5.5" y="8" width="9" height="7" rx="2" fill="#d8a8e8"/></g></svg><div style="position:absolute;left:263px;top:71px;width:571px;height:275px;background:#fff;border:1px solid #d0d0d0;box-sizing:border-box"></div><svg style="position:absolute;left:538px;top:347px" width="20" height="8" viewBox="0 0 20 8"><circle cx="4.7" cy="4" r="1.55" fill="#9a9a9a"/><circle cx="10.350000000000001" cy="4" r="1.55" fill="#9a9a9a"/><circle cx="16.0" cy="4" r="1.55" fill="#9a9a9a"/></svg><svg style="position:absolute;left:0;top:0" width="1200" height="675" viewBox="0 0 1200 675"><path d="M324 175.5H356C366 175.5 366 198.5 372 198.5" fill="none" stroke="#ff4848" stroke-width="1"/><path d="M324 198.5H372" fill="none" stroke="#ff4848" stroke-width="1"/><path d="M324 221.5H356C366 221.5 366 198.5 372 198.5" fill="none" stroke="#ff4848" stroke-width="1"/><path d="M324 253.5H356C366 253.5 366 276.5 372 276.5" fill="none" stroke="#ff4848" stroke-width="1"/><path d="M324 276.5H372" fill="none" stroke="#ff4848" stroke-width="1"/><path d="M324 299.5H356C366 299.5 366 276.5 372 276.5" fill="none" stroke="#ff4848" stroke-width="1"/><path d="M372 198.5H405C416 198.5 417 219 426 222.5" fill="none" stroke="#ff4848" stroke-width="1"/><path d="M372 276.5H405C418 276.5 420 240 430 235.5" fill="none" stroke="#ff4848" stroke-width="1"/><path d="M749 175.5H717C707 175.5 707 198.5 701 198.5" fill="none" stroke="#ff4848" stroke-width="1"/><path d="M749 198.5H701" fill="none" stroke="#ff4848" stroke-width="1"/><path d="M749 221.5H717C707 221.5 707 198.5 701 198.5" fill="none" stroke="#ff4848" stroke-width="1"/><path d="M749 253.5H717C707 253.5 707 276.5 701 276.5" fill="none" stroke="#ff4848" stroke-width="1"/><path d="M749 276.5H701" fill="none" stroke="#ff4848" stroke-width="1"/><path d="M749 299.5H717C707 299.5 707 276.5 701 276.5" fill="none" stroke="#ff4848" stroke-width="1"/><path d="M701 198.5H668C657 198.5 656 219 647 222.5" fill="none" stroke="#ff4848" stroke-width="1"/><path d="M701 276.5H668C655 276.5 653 240 642 235.5" fill="none" stroke="#ff4848" stroke-width="1"/><ellipse cx="536.4" cy="227.8" rx="113" ry="23.4" fill="#b1d2f4"/></svg><div class="t" style="left:325.3px;top:160.96px;font-size:13.4px;line-height:13.4px;color:#111;">Idée</div><div class="t" style="left:720.5px;top:160.96px;font-size:13.4px;line-height:13.4px;color:#111;">Idée</div><div class="t" style="left:325.3px;top:183.66px;font-size:13.4px;line-height:13.4px;color:#111;">Idée</div><div class="t" style="left:720.5px;top:183.66px;font-size:13.4px;line-height:13.4px;color:#111;">Idée</div><div class="t" style="left:325.3px;top:206.26px;font-size:13.4px;line-height:13.4px;color:#111;">Idée</div><div class="t" style="left:720.5px;top:206.26px;font-size:13.4px;line-height:13.4px;color:#111;">Idée</div><div class="t" style="left:325.3px;top:238.96px;font-size:13.4px;line-height:13.4px;color:#111;">Idée</div><div class="t" style="left:720.5px;top:238.96px;font-size:13.4px;line-height:13.4px;color:#111;">Idée</div><div class="t" style="left:325.3px;top:261.66px;font-size:13.4px;line-height:13.4px;color:#111;">Idée</div><div class="t" style="left:720.5px;top:261.66px;font-size:13.4px;line-height:13.4px;color:#111;">Idée</div><div class="t" style="left:325.3px;top:284.56px;font-size:13.4px;line-height:13.4px;color:#111;">Idée</div><div class="t" style="left:720.5px;top:284.56px;font-size:13.4px;line-height:13.4px;color:#111;">Idée</div><div class="t" style="left:375.5px;top:183.66px;font-size:13.4px;line-height:13.4px;color:#111;">Idée</div><div class="t" style="left:670.5px;top:183.66px;font-size:13.4px;line-height:13.4px;color:#111;">Idée</div><div class="t" style="left:375.5px;top:261.66px;font-size:13.4px;line-height:13.4px;color:#111;">Idée</div><div class="t" style="left:670.5px;top:261.66px;font-size:13.4px;line-height:13.4px;color:#111;">Idée</div><div class="t" style="left:455.7px;top:217.81px;font-size:24.2px;line-height:24.2px;color:#000;">Nouvelle carte</div><svg style="position:absolute;left:256px;top:377px" width="6" height="18" viewBox="0 0 6 18"><path d="M6 0V18L0 9Z" fill="#000"/></svg><svg style="position:absolute;left:837px;top:377px" width="6" height="18" viewBox="0 0 6 18"><path d="M0 0V18L6 9Z" fill="#000"/></svg><div style="position:absolute;left:267px;top:360px;width:563px;height:25px;background:#fff;border-bottom:1px solid #d8d8d8;box-sizing:border-box"></div><div class="t" style="left:276px;top:366.59px;font-size:12.3px;line-height:12.3px;color:#1a1a1a;">Édition</div><div class="t" style="left:333px;top:366.59px;font-size:12.3px;line-height:12.3px;color:#1a1a1a;">Mise en forme</div><div class="t" style="left:429px;top:366.59px;font-size:12.3px;line-height:12.3px;color:#1a1a1a;">Tableau</div><div class="t" style="left:490px;top:366.59px;font-size:12.3px;line-height:12.3px;color:#1a1a1a;">Aide</div><div style="position:absolute;left:366px;top:388px;width:1px;height:29px;background:#d4d4d4"></div><div style="position:absolute;left:464px;top:388px;width:1px;height:29px;background:#d4d4d4"></div><div style="position:absolute;left:272px;top:424px;width:218px;height:24px;background:#fff;border:1px solid #c8c8c8;border-radius:3px;box-sizing:border-box"></div><div class="t" style="left:280px;top:430.59px;font-size:12.3px;line-height:12.3px;color:#1a1a1a;">SansSerif</div><svg style="position:absolute;left:473px;top:434px" width="11" height="6" viewBox="0 0 11 6"><path d="M0 0H11L5.5 6Z" fill="#606060"/></svg><div style="position:absolute;left:494px;top:424px;width:69px;height:24px;background:#fff;border:1px solid #c8c8c8;border-radius:3px;box-sizing:border-box"></div><div class="t" style="left:502px;top:430.59px;font-size:12.3px;line-height:12.3px;color:#1a1a1a;">10</div><svg style="position:absolute;left:546px;top:434px" width="11" height="6" viewBox="0 0 11 6"><path d="M0 0H11L5.5 6Z" fill="#606060"/></svg><div style="position:absolute;left:540px;top:425px;width:1px;height:22px;background:#c8c8c8"></div><div style="position:absolute;left:566px;top:422px;width:1px;height:29px;background:#d4d4d4"></div><div style="position:absolute;left:272px;top:458px;width:97px;height:25px;background:#fff;border:1px solid #c8c8c8;border-radius:3px;box-sizing:border-box"></div><div class="t" style="left:280px;top:464.59px;font-size:12.3px;line-height:12.3px;color:#1a1a1a;">Paragrap…</div><svg style="position:absolute;left:352px;top:468px" width="11" height="6" viewBox="0 0 11 6"><path d="M0 0H11L5.5 6Z" fill="#606060"/></svg><div style="position:absolute;left:374px;top:457px;width:26px;height:26px;background:#d4d4d4;border-radius:2px"></div><div style="position:absolute;left:467px;top:456px;width:1px;height:29px;background:#d4d4d4"></div><div style="position:absolute;left:269px;top:489px;width:558px;height:162px;background:#fff;border:1px solid #d0d0d0;box-sizing:border-box"></div><div style="position:absolute;left:268px;top:654px;width:561px;height:1px;background:#d0d0d0"></div><div style="position:absolute;left:268px;top:653px;width:85px;height:3px;background:#8cb6e2"></div><div class="t" style="left:281px;top:667.59px;font-size:12.3px;line-height:12.3px;color:#1a1a1a;">Texte riche</div><div class="t" style="left:366px;top:667.59px;font-size:12.3px;line-height:12.3px;color:#1a1a1a;">Code HTML</div><div style="position:absolute;left:844px;top:117px;width:356px;height:1px;background:#d8d8d8"></div><div style="position:absolute;left:996px;top:115px;width:51px;height:3px;background:#8cb6e2"></div><div style="position:absolute;left:844px;top:120px;width:356px;height:555px;border-left:1px solid #d8d8d8;border-top:1px solid #dcdcdc;box-sizing:border-box"></div><div style="position:absolute;left:1195px;top:121px;width:5px;height:437px;background:#d9d9d9"></div><div style="position:absolute;left:847px;top:129px;width:347px;height:73px;border:1px solid #d8d8d8;box-sizing:border-box"></div><div class="t" style="left:851px;top:125.19px;font-size:12.3px;line-height:12.3px;color:#1a1a1a;background:#f0f0f0;padding:0 1px;margin-left:-1px">Présentations</div><div class="t" style="left:868px;top:149.49px;font-size:12.3px;line-height:12.3px;color:#1a1a1a;letter-spacing:1px">-/-</div><div style="position:absolute;left:905px;top:142px;width:284px;height:24px;background:#fff;border:1px solid #c8c8c8;border-radius:3px;box-sizing:border-box"></div><svg style="position:absolute;left:1172px;top:152px" width="11" height="6" viewBox="0 0 11 6"><path d="M0 0H11L5.5 6Z" fill="#606060"/></svg><div style="position:absolute;left:847px;top:211px;width:347px;height:73px;border:1px solid #d8d8d8;box-sizing:border-box"></div><div class="t" style="left:851px;top:207.19px;font-size:12.3px;line-height:12.3px;color:#1a1a1a;background:#f0f0f0;padding:0 1px;margin-left:-1px">Diapositives</div><div class="t" style="left:868px;top:231.49px;font-size:12.3px;line-height:12.3px;color:#9a9a9a;letter-spacing:1px">-/-</div><div style="position:absolute;left:905px;top:224px;width:284px;height:24px;background:#f0f0f0;border:1px solid #d8d8d8;border-radius:3px;box-sizing:border-box"></div><svg style="position:absolute;left:1172px;top:234px" width="11" height="6" viewBox="0 0 11 6"><path d="M0 0H11L5.5 6Z" fill="#a0a0a0"/></svg><div style="position:absolute;left:907px;top:171px;width:26px;height:26px;background:#fff;border:1px solid #d0d0d0;border-radius:3px;box-sizing:border-box"></div><div style="position:absolute;left:907px;top:253px;width:26px;height:26px;background:#f0f0f0;border:1px solid #d0d0d0;border-radius:3px;box-sizing:border-box"></div><div style="position:absolute;left:939px;top:171px;width:26px;height:26px;background:#f0f0f0;border:1px solid #d0d0d0;border-radius:3px;box-sizing:border-box"></div><div style="position:absolute;left:939px;top:253px;width:26px;height:26px;background:#f0f0f0;border:1px solid #d0d0d0;border-radius:3px;box-sizing:border-box"></div><div style="position:absolute;left:970px;top:171px;width:26px;height:26px;background:#f0f0f0;border:1px solid #d0d0d0;border-radius:3px;box-sizing:border-box"></div><div style="position:absolute;left:970px;top:253px;width:26px;height:26px;background:#f0f0f0;border:1px solid #d0d0d0;border-radius:3px;box-sizing:border-box"></div><div style="position:absolute;left:1002px;top:171px;width:26px;height:26px;background:#f0f0f0;border:1px solid #d0d0d0;border-radius:3px;box-sizing:border-box"></div><div style="position:absolute;left:1002px;top:253px;width:26px;height:26px;background:#f0f0f0;border:1px solid #d0d0d0;border-radius:3px;box-sizing:border-box"></div><div style="position:absolute;left:1033px;top:171px;width:26px;height:26px;background:#f0f0f0;border:1px solid #d0d0d0;border-radius:3px;box-sizing:border-box"></div><div style="position:absolute;left:1033px;top:253px;width:26px;height:26px;background:#f0f0f0;border:1px solid #d0d0d0;border-radius:3px;box-sizing:border-box"></div><div style="position:absolute;left:1065px;top:171px;width:26px;height:26px;background:#f0f0f0;border:1px solid #d0d0d0;border-radius:3px;box-sizing:border-box"></div><div style="position:absolute;left:1065px;top:253px;width:26px;height:26px;background:#f0f0f0;border:1px solid #d0d0d0;border-radius:3px;box-sizing:border-box"></div><div style="position:absolute;left:847px;top:294px;width:347px;height:376px;border:1px solid #d8d8d8;box-sizing:border-box"></div><div class="t" style="left:851px;top:290.09px;font-size:12.3px;line-height:12.3px;color:#1a1a1a;background:#f0f0f0;padding:0 1px;margin-left:-1px">Contenu de cette diapositive</div><div style="position:absolute;left:942px;top:306px;width:27px;height:27px;background:#f0f0f0;border:1px solid #d0d0d0;border-radius:3px;box-sizing:border-box"></div><div style="position:absolute;left:974px;top:306px;width:27px;height:27px;background:#f0f0f0;border:1px solid #d0d0d0;border-radius:3px;box-sizing:border-box"></div><div style="position:absolute;left:1005px;top:306px;width:27px;height:27px;background:#f0f0f0;border:1px solid #d0d0d0;border-radius:3px;box-sizing:border-box"></div><div style="position:absolute;left:1036px;top:306px;width:27px;height:27px;background:#f0f0f0;border:1px solid #d0d0d0;border-radius:3px;box-sizing:border-box"></div><div style="position:absolute;left:1068px;top:306px;width:27px;height:27px;background:#f0f0f0;border:1px solid #d0d0d0;border-radius:3px;box-sizing:border-box"></div><div style="position:absolute;left:901px;top:354px;width:235px;height:26px;background:#f0f0f0;border:1px solid #d0d0d0;border-radius:3px;box-sizing:border-box"></div><div class="t" style="left:943px;top:362.19px;font-size:12.3px;line-height:12.3px;color:#999999;">Positionner le nœud sélectionné</div><div style="position:absolute;left:973px;top:385px;width:27px;height:27px;background:#f0f0f0;border:1px solid #d0d0d0;border-radius:3px;box-sizing:border-box"></div><div style="position:absolute;left:1005px;top:385px;width:27px;height:27px;background:#f0f0f0;border:1px solid #d0d0d0;border-radius:3px;box-sizing:border-box"></div><div style="position:absolute;left:1036px;top:385px;width:27px;height:27px;background:#f0f0f0;border:1px solid #d0d0d0;border-radius:3px;box-sizing:border-box"></div><div style="position:absolute;left:936px;top:433px;width:164px;height:26px;background:#f0f0f0;border:1px solid #d0d0d0;border-radius:3px;box-sizing:border-box"></div><div class="t" style="left:978px;top:441.69px;font-size:12.3px;line-height:12.3px;color:#999999;">Mémoriser le zoom</div><div style="position:absolute;left:889px;top:465px;width:15px;height:15px;border:1px solid #c4c4c4;border-radius:2px;box-sizing:border-box"></div><div class="t" style="left:909px;top:468.69px;font-size:12.3px;line-height:12.3px;color:#999999;">Afficher uniquement les nœuds sélectionnés</div><div style="position:absolute;left:957px;top:487px;width:15px;height:15px;border:1px solid #c4c4c4;border-radius:2px;box-sizing:border-box"></div><div class="t" style="left:977px;top:490.99px;font-size:12.3px;line-height:12.3px;color:#999999;">Afficher les parents</div><div style="position:absolute;left:971px;top:509px;width:15px;height:15px;border:1px solid #c4c4c4;border-radius:2px;box-sizing:border-box"></div><div class="t" style="left:990px;top:512.99px;font-size:12.3px;line-height:12.3px;color:#999999;">Afficher les fils</div><div style="position:absolute;left:939px;top:531px;width:159px;height:26px;background:#f0f0f0;border:1px solid #d0d0d0;border-radius:3px;box-sizing:border-box"></div><div class="t" style="left:981px;top:539.99px;font-size:12.3px;line-height:12.3px;color:#999999;">Mémoriser le filtre</div><div style="position:absolute;left:984px;top:568px;width:69px;height:67px;border:1px solid #d0d0d0;box-sizing:border-box"></div><div class="t" style="left:989px;top:563.89px;font-size:12.3px;line-height:12.3px;color:#111;background:#f0f0f0;padding:0 1px;margin-left:-1px">Filtre</div><div class="t" style="left:987px;top:599.89px;font-size:12.3px;line-height:12.3px;color:#999999;">Aucun filtre</div><div style="position:absolute;left:935px;top:638px;width:167px;height:27px;background:#f0f0f0;border:1px solid #d0d0d0;border-radius:3px;box-sizing:border-box"></div><div class="t" style="left:977px;top:647.19px;font-size:12.3px;line-height:12.3px;color:#999999;">Mémoriser le pliage</div><svg style="position:absolute;left:0;top:0" width="1200" height="675"><text x="16.3" y="85.6" font-family="Liberation Sans" font-weight="bold" font-size="9.5" text-anchor="middle" fill="#111">?</text><circle cx="16.5" cy="90.7" r="4.5" fill="#3b7fcf"/><path d="M11.9 94.8L20.9 86.4" stroke="#f0f0f0" stroke-width="3.2"/><path d="M11.9 94.8L20.9 86.4" stroke="#111" stroke-width="1.5"/><circle cx="38.2" cy="88.2" r="4.5" fill="#3b7fcf"/><path d="M33.8 92.8L42.9 84.3" stroke="#f0f0f0" stroke-width="3.2"/><path d="M33.8 92.8L42.9 84.3" stroke="#111" stroke-width="1.5"/><circle cx="46.9" cy="89.4" r="2.7" fill="#444"/><circle cx="70.7" cy="88.2" r="4.5" fill="#3b7fcf"/><path d="M66.2 92.8L75.1 84.3" stroke="#f0f0f0" stroke-width="3.2"/><path d="M66.2 92.8L75.1 84.3" stroke="#111" stroke-width="1.5"/><circle cx="61.5" cy="89.4" r="2.7" fill="#000"/><rect x="86" y="82.6" width="13.4" height="1.8" rx="0.6" fill="#000"/><path d="M89.2 82.8V80.2H96.3V82.8" fill="none" stroke="#000" stroke-width="1.3"/><path d="M87.8 85.8H97.8V95Q97.8 96.9 95.8 96.9H89.8Q87.8 96.9 87.8 95Z" fill="#000"/><rect x="6" y="113.8" width="20" height="19.4" fill="#23404a"/><defs><linearGradient id="filmg" x1="0" y1="0" x2="1" y2="0"><stop offset="0" stop-color="#c8d0d0"/><stop offset="1" stop-color="#7a8c90"/></linearGradient></defs><rect x="8" y="116.5" width="16" height="14" fill="url(#filmg)"/><rect x="7.3" y="114.6" width="2" height="1.4" fill="#fff"/><rect x="7.3" y="131" width="2" height="1.4" fill="#fff"/><rect x="11.0" y="114.6" width="2" height="1.4" fill="#fff"/><rect x="11.0" y="131" width="2" height="1.4" fill="#fff"/><rect x="14.7" y="114.6" width="2" height="1.4" fill="#fff"/><rect x="14.7" y="131" width="2" height="1.4" fill="#fff"/><rect x="18.400000000000002" y="114.6" width="2" height="1.4" fill="#fff"/><rect x="18.400000000000002" y="131" width="2" height="1.4" fill="#fff"/><rect x="22.1" y="114.6" width="2" height="1.4" fill="#fff"/><rect x="22.1" y="131" width="2" height="1.4" fill="#fff"/><path d="M14 119.5V127.5L19.5 123.5Z" fill="#000"/><rect x="10.6" y="148.3" width="19.4" height="20.7" rx="2.5" fill="#f39a22"/><path d="M13 150H27Q29 150 29 152V167" fill="none" stroke="#e0e0e0" stroke-width="1.3"/><rect x="13" y="151" width="15" height="17.5" rx="1" fill="#f8aa3a"/><path d="M42 154V163.5L48 158.7Z" fill="#777"/><path d="M55.3 156.5V161L58.2 158.7Z" fill="#000"/><rect x="281.6" y="394.2" width="8.6" height="4.5" fill="none" stroke="#000" stroke-width="1.4"/><rect x="277.3" y="397.8" width="16.8" height="6.8" rx="0.8" fill="#000"/><rect x="281.6" y="401.6" width="8.6" height="8" fill="#f0f0f0" stroke="#3b7fcf" stroke-width="1.4"/><circle cx="292" cy="399.6" r="0.7" fill="#fff"/><path transform="translate(301.3,350.2)" d="M7.8 50 L13.8 44 V47.8 H14.5 C19.5 47.8 23.2 51 23.2 55.5 V59.6 H18.5 V55.8 C18.5 53.8 17 52.5 14.8 52.5 H13.8 V56.2 Z" fill="#000"/><path transform="translate(308.1,350.2) translate(56.8,0) scale(-1,1)" d="M7.8 50 L13.8 44 V47.8 H14.5 C19.5 47.8 23.2 51 23.2 55.5 V59.6 H18.5 V55.8 C18.5 53.8 17 52.5 14.8 52.5 H13.8 V56.2 Z" fill="#000"/><g transform="translate(233,371.6)"><path d="M145.1 22.5L151.9 34M153.4 22.5L147.3 34" stroke="#000" stroke-width="1.4"/><circle cx="145.9" cy="35.7" r="2" fill="none" stroke="#3b7fcf" stroke-width="1.6"/><circle cx="153.7" cy="35.7" r="2" fill="none" stroke="#3b7fcf" stroke-width="1.6"/></g><g transform="translate(240,371)"><path d="M170.5 35.5H168.2V22.3H177.3V24.6" fill="none" stroke="#000" stroke-width="1.5"/><path d="M173.3 38.4V25.3H179.3L182.1 28.1V38.4Z" fill="none" stroke="#000" stroke-width="1.5"/><path d="M176 32.2H179.6M176 35H179.6" stroke="#3b7fcf" stroke-width="1.3"/></g><g transform="translate(246,371)"><path d="M196 24.3H194V38.8H207.3V24.3H205.3" fill="none" stroke="#000" stroke-width="1.6"/><rect x="197.6" y="22" width="6" height="2.6" fill="#000"/><path d="M196.6 27H204.6V34.5Q204.6 36 203 36H196.6Z" fill="#3b7fcf"/></g><circle cx="480.1" cy="400.1" r="5.4" fill="none" stroke="#000" stroke-width="2.8"/><path d="M484.40000000000003 404.40000000000003L487.70000000000005 407.70000000000005" stroke="#000" stroke-width="3.2" stroke-linecap="butt"/><text x="577" y="444" font-family="Liberation Serif" font-weight="bold" font-size="20" fill="#000">B</text><text x="608" y="444" font-family="Liberation Serif" font-style="italic" font-size="20" fill="#000">I</text><text x="639.5" y="443" font-family="Liberation Serif" font-weight="bold" font-size="18" fill="#000">U</text><rect x="640" y="443.3" width="14.5" height="1.8" fill="#000"/><text x="678.5" y="441.5" font-family="Liberation Serif" font-style="italic" font-size="17" text-anchor="middle" fill="#000">A</text><rect x="671" y="443" width="15.5" height="2.2" fill="#3b7fcf"/><rect x="702" y="427" width="16.5" height="18" fill="#3b7fcf"/><text x="710.2" y="442" font-family="Liberation Serif" font-weight="bold" font-size="16" text-anchor="middle" fill="#000">A</text><path d="M733.5 440.5H736.5M735 440.5L741 427.5H742.5L743.5 436M738 435H742.5" fill="none" stroke="#000" stroke-width="1.5"/><rect x="742" y="433.5" width="7.5" height="7" rx="1.3" fill="#3b7fcf" transform="rotate(45 745.7 437)"/><path d="M738.8 440.6L742.6 444.2" stroke="#3b7fcf" stroke-width="2.4" stroke-linecap="round"/><rect x="379" y="462.5" width="16" height="1.6" fill="#000"/><rect x="379" y="465.7" width="10" height="1.6" fill="#000"/><rect x="379" y="468.9" width="16" height="1.6" fill="#000"/><rect x="379" y="472.1" width="10" height="1.6" fill="#000"/><rect x="379" y="475.3" width="16" height="1.6" fill="#000"/><rect x="410.0" y="462.5" width="16" height="1.6" fill="#000"/><rect x="413.0" y="465.7" width="10" height="1.6" fill="#000"/><rect x="410.0" y="468.9" width="16" height="1.6" fill="#000"/><rect x="413.0" y="472.1" width="10" height="1.6" fill="#000"/><rect x="410.0" y="475.3" width="16" height="1.6" fill="#000"/><rect x="442" y="462.5" width="16" height="1.6" fill="#000"/><rect x="448" y="465.7" width="10" height="1.6" fill="#000"/><rect x="442" y="468.9" width="16" height="1.6" fill="#000"/><rect x="448" y="472.1" width="10" height="1.6" fill="#000"/><rect x="442" y="475.3" width="16" height="1.6" fill="#000"/><circle cx="478.6" cy="463.3" r="1.5" fill="#000"/><rect x="482.5" y="462.5" width="10.5" height="1.7" fill="#000"/><text x="510.5" y="466.0" font-family="Liberation Sans" font-size="5" text-anchor="middle" fill="#000">1</text><rect x="514" y="462.5" width="10.5" height="1.7" fill="#000"/><circle cx="478.6" cy="469.1" r="1.5" fill="#000"/><rect x="482.5" y="468.3" width="10.5" height="1.7" fill="#000"/><text x="510.5" y="471.8" font-family="Liberation Sans" font-size="5" text-anchor="middle" fill="#000">2</text><rect x="514" y="468.3" width="10.5" height="1.7" fill="#000"/><circle cx="478.6" cy="474.90000000000003" r="1.5" fill="#000"/><rect x="482.5" y="474.1" width="10.5" height="1.7" fill="#000"/><text x="510.5" y="477.6" font-family="Liberation Sans" font-size="5" text-anchor="middle" fill="#000">3</text><rect x="514" y="474.1" width="10.5" height="1.7" fill="#000"/><path d="M867 91.5Q877.5 91.5 877.8 99Q878 106 870 107.5Q862 108.5 859.5 105Q858 103 860.5 101.5Q862 100.5 860 99.5Q857 99 857.2 97Q858 91.5 867 91.5Z" fill="none" stroke="#333" stroke-width="1.1"/><ellipse cx="864.5" cy="102.8" rx="2" ry="1.3" fill="none" stroke="#333" stroke-width="0.9"/><circle cx="863.3" cy="95.5" r="1.3" fill="#3b7fcf"/><circle cx="867.2" cy="94.2" r="1.3" fill="#3b7fcf"/><circle cx="871.5" cy="96.8" r="1.3" fill="#3b7fcf"/><circle cx="872" cy="101" r="1.3" fill="#3b7fcf"/><rect x="915.2" y="90.3" width="6.6" height="3.8" rx="1" fill="#3b7fcf" stroke="#444" stroke-width="0.7"/><rect x="915.2" y="94.89999999999999" width="6.6" height="3.8" rx="1" fill="#f0f0f0" stroke="#555" stroke-width="0.8"/><rect x="915.2" y="99.5" width="6.6" height="3.8" rx="1" fill="#3b7fcf" stroke="#444" stroke-width="0.7"/><rect x="915.2" y="104.1" width="6.6" height="3.8" rx="1" fill="#f0f0f0" stroke="#555" stroke-width="0.8"/><rect x="959.6" y="89.5" width="20" height="19.6" rx="1" fill="#fff" stroke="#3b7fcf" stroke-width="0.9"/><rect x="959.6" y="89.5" width="20" height="5.6" fill="#3b7fcf"/><text x="966.5" y="94.5" font-family="Liberation Sans" font-weight="bold" font-size="5" text-anchor="middle" fill="#fff">MAR</text><text x="969.8" y="106.5" font-family="Liberation Sans" font-weight="bold" font-size="11" text-anchor="middle" fill="#111">21</text><rect x="1011.3" y="98.5" width="19" height="10" rx="1.2" fill="none" stroke="#3b7fcf" stroke-width="1.1"/><path d="M1011 93.5L1029.5 90.5L1030.2 93.3L1011.7 96.3Z" fill="#111"/><path d="M1015 92.9L1018 92.4L1019.5 95.1L1016.5 95.6ZM1021 91.9L1024 91.4L1025.5 94.1L1022.5 94.6Z" fill="#fff"/><rect x="1011" y="96.5" width="19.5" height="2.8" fill="#111"/><path d="M1014 96.5H1017L1015.5 99.3H1012.5ZM1020 96.5H1023L1021.5 99.3H1018.5ZM1026 96.5H1029L1027.5 99.3H1024.5Z" fill="#fff"/><rect x="911.5" y="177.8" width="17" height="1.8" fill="#3b7fcf"/><rect x="912.5" y="178.8" width="15" height="9" fill="#3b7fcf"/><path d="M919.8 180.60000000000002V186.0M917.1 183.3H922.5" stroke="#fff" stroke-width="1.6"/><path d="M919.8 187.8V191.8M919.8 187.8L915.5 191.3M919.8 187.8L924 191.3" stroke="#3b7fcf" stroke-width="1.5"/><rect x="945.0" y="177.60000000000002" width="13" height="1.5" fill="#8f8f8f"/><path d="M948.0 177.60000000000002V175.8H955.0V177.60000000000002" fill="none" stroke="#8f8f8f" stroke-width="1"/><path d="M946.3 180.20000000000002H956.7V189.3Q956.7 191.5 954.5 191.5H948.5Q946.3 191.5 946.3 189.3Z" fill="#8f8f8f"/><path d="M983 175.8L989.3 182.3H985.2V191.5H980.8V182.3H976.7Z" fill="#8f8f8f"/><path d="M1014.4 191.5L1020.6999999999999 185.0H1016.6V175.8H1012.1999999999999V185.0H1008.1Z" fill="#8f8f8f"/><path d="M1039 179.8L1042.5 176.8V178.60000000000002H1052.5V181.0H1042.5V182.8Z" fill="#8f8f8f"/><path d="M1053 188.10000000000002L1049.5 185.10000000000002V186.9H1039.5V189.3H1049.5V191.10000000000002Z" fill="#8f8f8f"/><path d="M1069.7 188.8V175.8H1082.7" fill="none" stroke="#8f8f8f" stroke-width="1.2"/><rect x="1072.2" y="178.3" width="12.5" height="12.5" fill="none" stroke="#8f8f8f" stroke-width="1.4"/><rect x="913.5" y="259.8" width="13" height="11" rx="1" fill="none" stroke="#8f8f8f" stroke-width="1.2"/><rect x="913.5" y="267.8" width="13" height="3.2" fill="#8f8f8f"/><path d="M919.8 262.0V266.1M917.8 264.0H921.8" stroke="#8f8f8f" stroke-width="1.3"/><rect x="945.0" y="259.6" width="13" height="1.5" fill="#8f8f8f"/><path d="M948.0 259.6V257.8H955.0V259.6" fill="none" stroke="#8f8f8f" stroke-width="1"/><path d="M946.3 262.2H956.7V271.3Q956.7 273.5 954.5 273.5H948.5Q946.3 273.5 946.3 271.3Z" fill="#8f8f8f"/><path d="M983 257.8L989.3 264.3H985.2V273.5H980.8V264.3H976.7Z" fill="#8f8f8f"/><path d="M1014.4 273.5L1020.6999999999999 267.0H1016.6V257.8H1012.1999999999999V267.0H1008.1Z" fill="#8f8f8f"/><path d="M1039 261.8L1042.5 258.8V260.6H1052.5V263.0H1042.5V264.8Z" fill="#8f8f8f"/><path d="M1053 270.1L1049.5 267.1V268.90000000000003H1039.5V271.3H1049.5V273.1Z" fill="#8f8f8f"/><path d="M1069.7 270.8V257.8H1082.7" fill="none" stroke="#8f8f8f" stroke-width="1.2"/><rect x="1072.2" y="260.3" width="12.5" height="12.5" fill="none" stroke="#8f8f8f" stroke-width="1.4"/><path d="M947.3 311.5V327.8H962.3" fill="none" stroke="#000" stroke-width="1.6"/><path d="M950.5 314V324.5H960.5M953.3 316.5V321.5H959.5M956 313.5V318.5H960M958.8 310.5V315H962.7" fill="none" stroke="#3b7fcf" stroke-width="1.3"/><rect x="978.7" y="315.5" width="16.3" height="8.2" rx="2.5" fill="#a8a8a8"/><rect x="1010.5" y="318" width="16.5" height="8" rx="2" fill="#a8a8a8"/><path d="M1017.5 324L1026.8 314.5" stroke="#f0f0f0" stroke-width="3"/><path d="M1017.5 323.5L1026.5 314.5" stroke="#a8a8a8" stroke-width="1.6"/><rect x="1042" y="315.5" width="16.5" height="7.5" rx="2" fill="#a8a8a8"/><path d="M1044.5 311.5L1050 317M1050 311.5L1044.5 317" stroke="#f0f0f0" stroke-width="3"/><path d="M1044.5 311.5L1050 317M1050 311.5L1044.5 317" stroke="#a8a8a8" stroke-width="1.3"/><rect x="1077.5" y="313" width="14.5" height="7" rx="2.2" fill="#a8a8a8"/><path d="M1079 318.5A4 4 0 1 0 1080.5 326" fill="none" stroke="#8a8a8a" stroke-width="2.2"/><path d="M1079.5 325L1082.5 328.2" stroke="#8a8a8a" stroke-width="2.2"/><rect x="924" y="365.7" width="8" height="3.6" rx="1.2" fill="#3b7fcf"/><path d="M919.3 365V370.2L922.6 367.6Z M937 365V370.2L933.7 367.6Z M925.5 361H930.5L928 363.2Z M925.5 374H930.5L928 371.8Z" fill="#000"/><rect x="978.7" y="397.3" width="8" height="4" rx="1.5" fill="#3b7fcf"/><path d="M988 399.3L991.3 396.5V398.3H995V400.3H991.3V402.1Z" fill="#000"/><path d="M1010 396.5V402.1L1013.3 399.3Z M1028.7 396.5V402.1L1025.4 399.3Z" fill="#000"/><rect x="1014.7" y="397.3" width="9.5" height="4" rx="1.5" fill="#3b7fcf"/><path d="M1049 399.3L1045.7 396.5V398.3H1042V400.3H1045.7V402.1Z" fill="#000"/><rect x="1050.7" y="397.3" width="8" height="4" rx="1.5" fill="#3b7fcf"/><path d="M962.6 443A4.4 4.4 0 1 0 963.8 450.5" fill="none" stroke="#000" stroke-width="2.5"/><path d="M963 450L966 453" stroke="#000" stroke-width="2.5"/><path d="M960.2 447L968.6 438.4" stroke="#3b7fcf" stroke-width="2.6"/><path d="M958 535.5H974L968 542V550Q968 551.3 964.5 552.3V542Z" fill="#000"/><path d="M954 647.3H962.5L960 655.7H954.5Q953 655.7 953 654V648.5Q953 647.3 954 647.3Z" fill="#3b7fcf"/><path d="M963 647.8H969.5V655.2H961.5" fill="none" stroke="#c8c8c8" stroke-width="1.2"/><path d="M893.5 667V675M893.5 667L899 673" stroke="#333" stroke-width="0.9" fill="none"/><path d="M11 0H16Q16 3 13.5 3.5Q11 3 11 0Z" fill="#1a8af0"/><path d="M249 0Q249 3 246.5 3Q244.5 3 244 2" fill="none" stroke="#333" stroke-width="1"/><rect x="842.6" y="0" width="1" height="2" fill="#444"/><rect x="918.6" y="0" width="1" height="2" fill="#444"/></svg>
</body></html>
